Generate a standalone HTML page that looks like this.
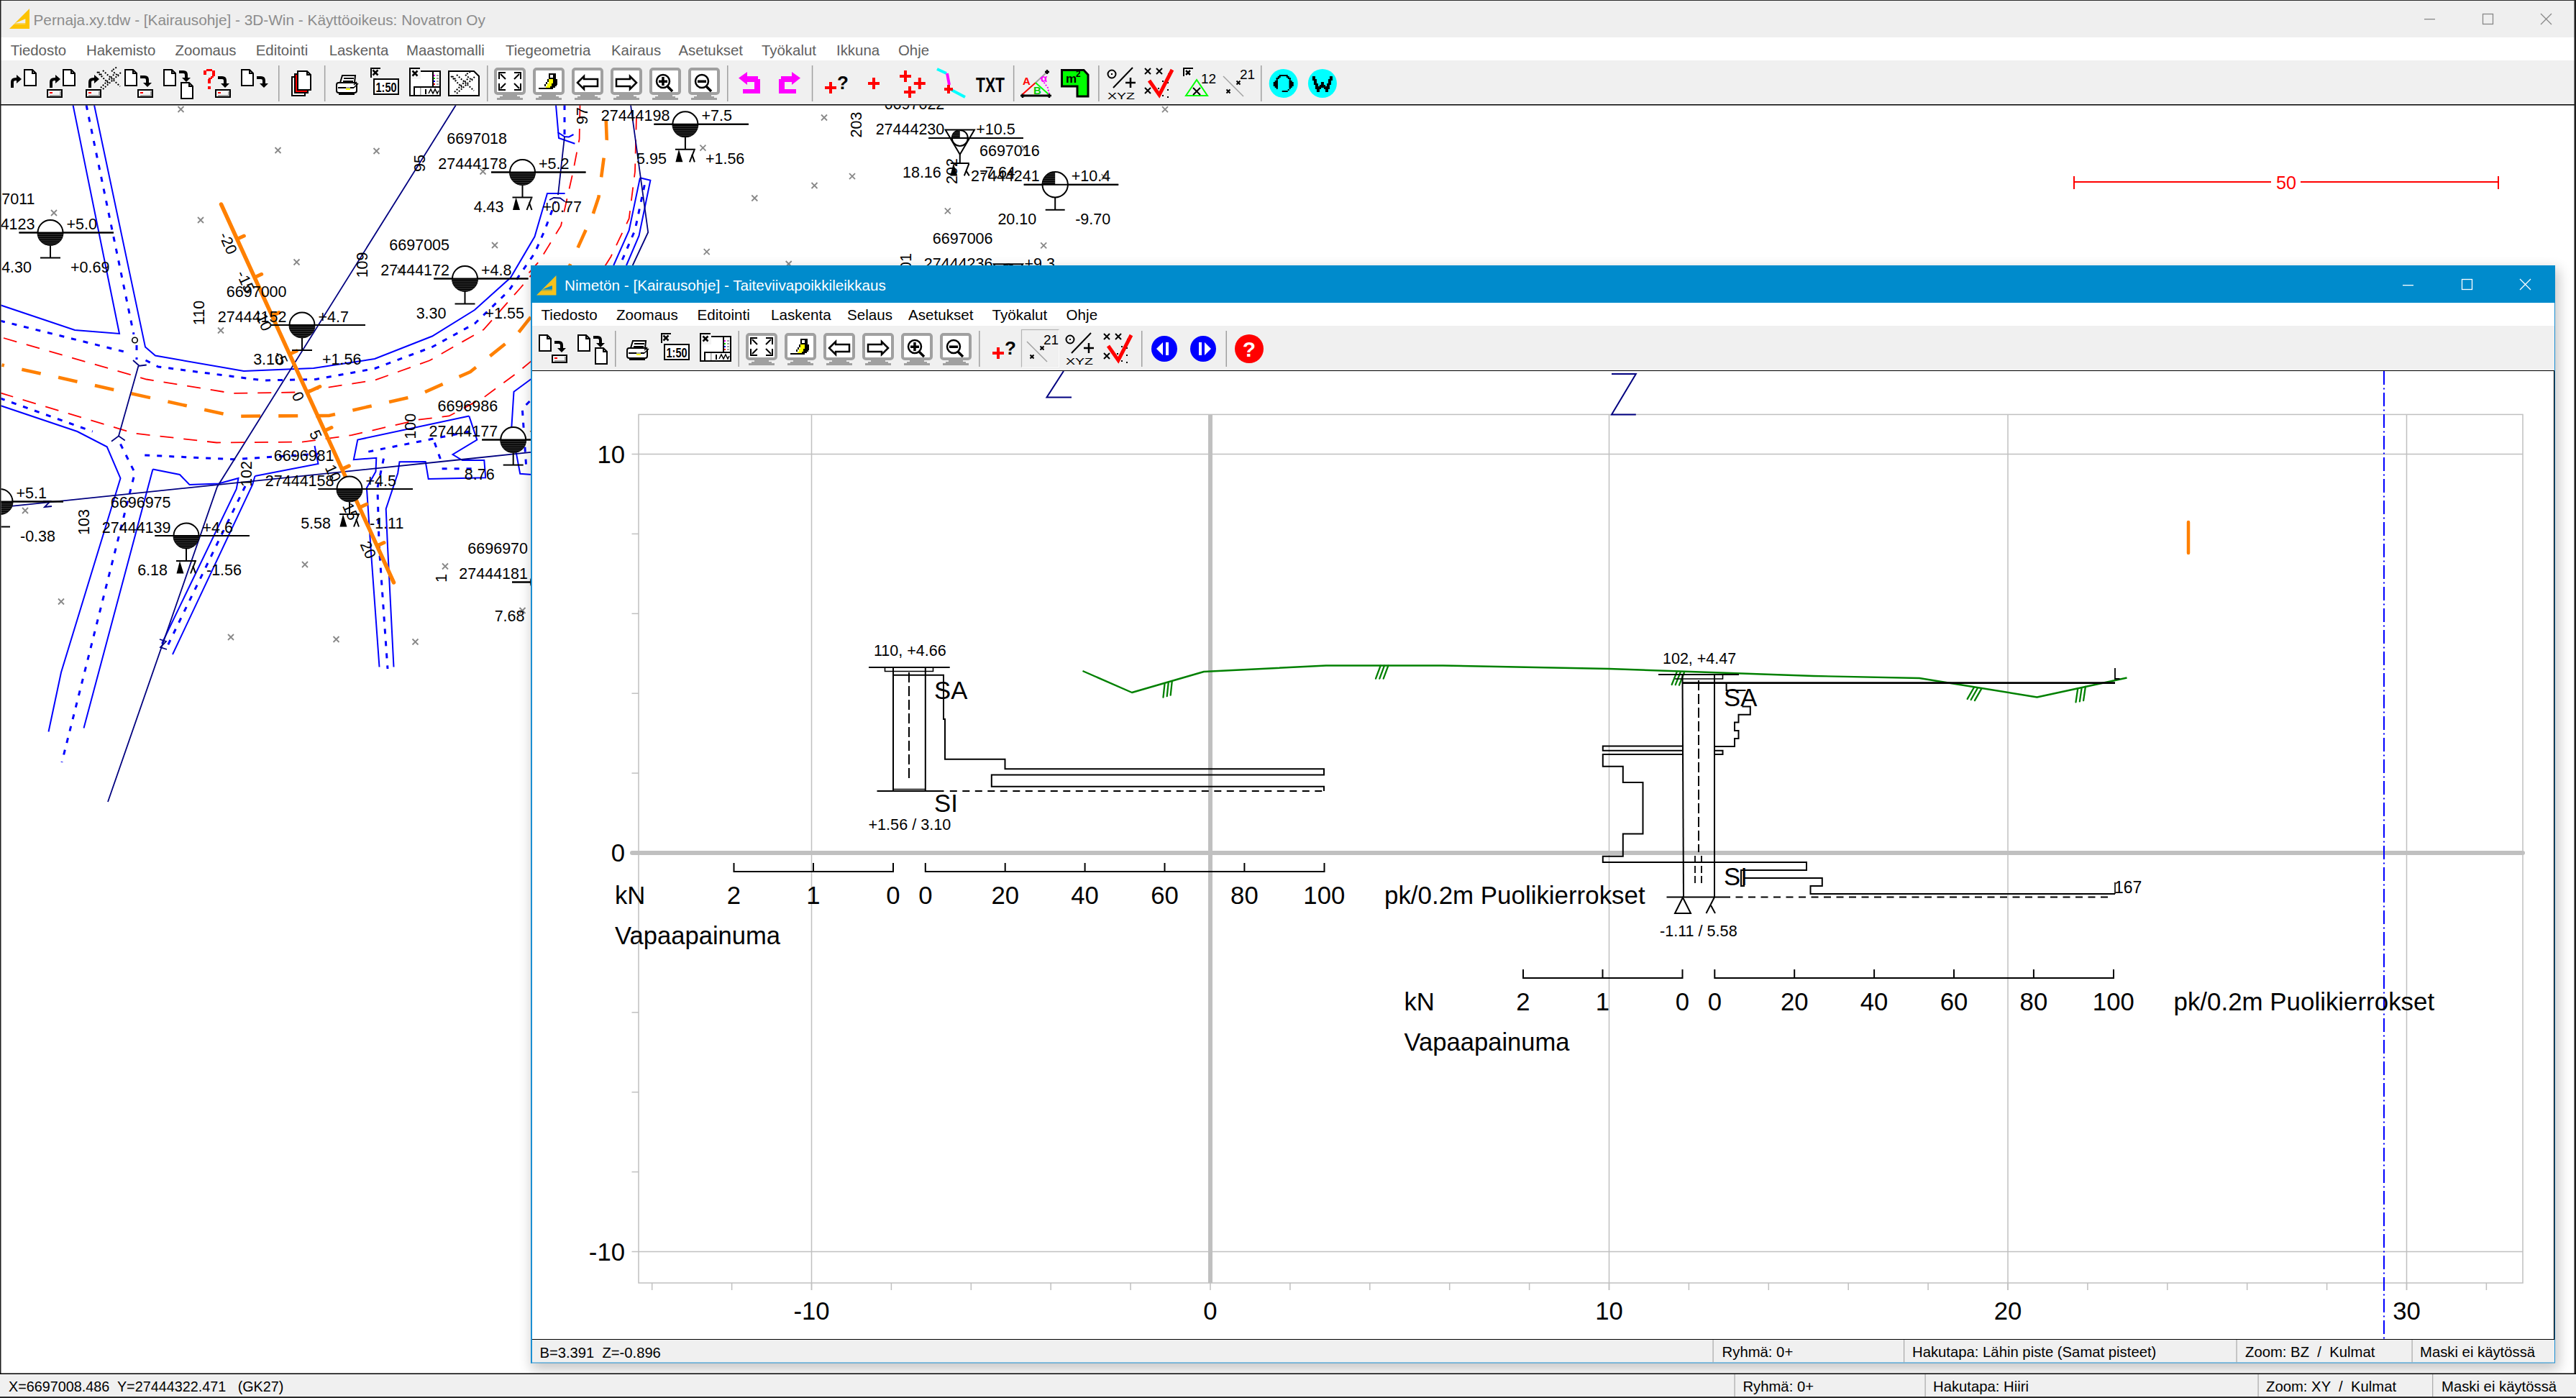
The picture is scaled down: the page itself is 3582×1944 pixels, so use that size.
<!DOCTYPE html>
<html><head><meta charset="utf-8"><title>3D-Win</title>
<style>
html,body{margin:0;padding:0;background:#fff;}
body{width:3582px;height:1944px;overflow:hidden;position:relative;font-family:"Liberation Sans",sans-serif;}
svg{position:absolute;left:0;top:0;}
text{font-family:"Liberation Sans",sans-serif;}
</style></head><body>
<svg width="3582" height="1944" viewBox="0 0 3582 1944">
<defs><clipPath id="mapclip"><rect x="1.5" y="146.5" width="3578" height="1763"/></clipPath><pattern id="hatch" patternUnits="userSpaceOnUse" width="6" height="3"><rect width="6" height="3" fill="#000"/><rect y="1.6" width="6" height="0.7" fill="#666"/></pattern></defs>
<g clip-path="url(#mapclip)">
<path d="M247.5 148l8 8m0 -8l-8 8" stroke="#888888" stroke-width="1.8"/>
<path d="M382.5 205l8 8m0 -8l-8 8" stroke="#888888" stroke-width="1.8"/>
<path d="M519.5 206l8 8m0 -8l-8 8" stroke="#888888" stroke-width="1.8"/>
<path d="M71 292l8 8m0 -8l-8 8" stroke="#888888" stroke-width="1.8"/>
<path d="M275 302l8 8m0 -8l-8 8" stroke="#888888" stroke-width="1.8"/>
<path d="M408.5 360.5l8 8m0 -8l-8 8" stroke="#888888" stroke-width="1.8"/>
<path d="M684 337l8 8m0 -8l-8 8" stroke="#888888" stroke-width="1.8"/>
<path d="M303 455.5l8 8m0 -8l-8 8" stroke="#888888" stroke-width="1.8"/>
<path d="M420 457l8 8m0 -8l-8 8" stroke="#888888" stroke-width="1.8"/>
<path d="M667.5 234.5l8 8m0 -8l-8 8" stroke="#888888" stroke-width="1.8"/>
<path d="M552.5 372l8 8m0 -8l-8 8" stroke="#888888" stroke-width="1.8"/>
<path d="M31 706l8 8m0 -8l-8 8" stroke="#888888" stroke-width="1.8"/>
<path d="M420 781l8 8m0 -8l-8 8" stroke="#888888" stroke-width="1.8"/>
<path d="M615 783.5l8 8m0 -8l-8 8" stroke="#888888" stroke-width="1.8"/>
<path d="M81 832.5l8 8m0 -8l-8 8" stroke="#888888" stroke-width="1.8"/>
<path d="M317 882l8 8m0 -8l-8 8" stroke="#888888" stroke-width="1.8"/>
<path d="M463.5 885l8 8m0 -8l-8 8" stroke="#888888" stroke-width="1.8"/>
<path d="M573.5 888.5l8 8m0 -8l-8 8" stroke="#888888" stroke-width="1.8"/>
<path d="M722.5 845l8 8m0 -8l-8 8" stroke="#888888" stroke-width="1.8"/>
<path d="M973.4 201.6l8 8m0 -8l-8 8" stroke="#888888" stroke-width="1.8"/>
<path d="M1142 159.5l8 8m0 -8l-8 8" stroke="#888888" stroke-width="1.8"/>
<path d="M1181 241.2l8 8m0 -8l-8 8" stroke="#888888" stroke-width="1.8"/>
<path d="M1128.5 254l8 8m0 -8l-8 8" stroke="#888888" stroke-width="1.8"/>
<path d="M1045.3 271.5l8 8m0 -8l-8 8" stroke="#888888" stroke-width="1.8"/>
<path d="M978.7 346.2l8 8m0 -8l-8 8" stroke="#888888" stroke-width="1.8"/>
<path d="M1092.7 363l8 8m0 -8l-8 8" stroke="#888888" stroke-width="1.8"/>
<path d="M1313.8 289.3l8 8m0 -8l-8 8" stroke="#888888" stroke-width="1.8"/>
<path d="M1420.5 202.2l8 8m0 -8l-8 8" stroke="#888888" stroke-width="1.8"/>
<path d="M1531.5 242.1l8 8m0 -8l-8 8" stroke="#888888" stroke-width="1.8"/>
<path d="M1447.2 337.3l8 8m0 -8l-8 8" stroke="#888888" stroke-width="1.8"/>
<path d="M1616 148.2l8 8m0 -8l-8 8" stroke="#888888" stroke-width="1.8"/>
<polyline points="101.5,146 166,464 104,459 0,424" fill="none" stroke="#0000ff" stroke-width="2" />
<polyline points="131,146 202,482.5 216,494.5 339,516 436,512 521,499 601,467.5 660,431 710,386 743.5,329 761,269 785.6,269" fill="none" stroke="#0000ff" stroke-width="2" />
<polyline points="773,146 777,192 799.4,199.75" fill="none" stroke="#0000ff" stroke-width="2" />
<polyline points="775.6,184 785,190 791,190.4 797.5,187" fill="none" stroke="#0000ff" stroke-width="2" />
<polyline points="890,247.25 904.4,250.75 888.5,328 871,369" fill="none" stroke="#0000ff" stroke-width="2" />
<polyline points="890,247.25 874.7,320.4 853.2,369" fill="none" stroke="#0000ff" stroke-width="2" />
<polyline points="0,563.75 107.5,600 148.75,621.25 167.5,665 85,935 67.5,1017.5" fill="none" stroke="#0000ff" stroke-width="2" />
<polyline points="212.5,652.5 116.5,1012.5" fill="none" stroke="#0000ff" stroke-width="2" />
<polyline points="212.5,652.5 250,660 263.5,674 304,672.5 331.5,665 328.75,680 225,895" fill="none" stroke="#0000ff" stroke-width="2" />
<polyline points="354.5,662 351.25,673.75 240,910" fill="none" stroke="#0000ff" stroke-width="2" />
<polyline points="354.5,662 442.5,645 437.5,620" fill="none" stroke="#0000ff" stroke-width="2" />
<polyline points="652.3,578.6 497.3,611.6 491.8,639.2 523.3,636.8 522.5,655.7 509.9,678.5 515.4,760 527.5,927.5" fill="none" stroke="#0000ff" stroke-width="2" />
<polyline points="652.3,578.6 663.3,611.6 629.5,632 642.9,640 673.3,640 675.2,664.3 595.7,665.9 591.7,642 555.5,642.3 553.2,658 536.7,707.6 539,760 547.5,927.5" fill="none" stroke="#0000ff" stroke-width="2" />
<polyline points="740,526 714.5,544.7 711.3,595 723.2,658.8 739.7,660" fill="none" stroke="#0000ff" stroke-width="2" />
<polyline points="120,146 186,465" fill="none" stroke="#0000ff" stroke-width="3" stroke-dasharray="7 10" />
<polyline points="190,480 190,500" fill="none" stroke="#0000ff" stroke-width="3" stroke-dasharray="7 10" />
<circle cx="187.5" cy="473" r="3.8" fill="none" stroke="#000" stroke-width="1.6"/>
<polyline points="202.5,501 220,510 366,529 439,527.5 521,512.5 601,482.5 660,450 707,405 743.5,352 757.5,320 772.5,280" fill="none" stroke="#0000ff" stroke-width="3" stroke-dasharray="7 10" />
<polyline points="785,146 785,187" fill="none" stroke="#0000ff" stroke-width="3" stroke-dasharray="7 10" />
<polyline points="0,446 172.5,489" fill="none" stroke="#0000ff" stroke-width="3" stroke-dasharray="7 10" />
<polyline points="0,553.75 128.75,600" fill="none" stroke="#0000ff" stroke-width="3" stroke-dasharray="7 10" />
<polyline points="167.5,617.5 187.5,657.5 86,1060" fill="none" stroke="#0000ff" stroke-width="3" stroke-dasharray="7 10" />
<polyline points="201.25,633 325,638.75 442.5,631.25" fill="none" stroke="#0000ff" stroke-width="3" stroke-dasharray="7 10" />
<polyline points="341,676 232,900" fill="none" stroke="#0000ff" stroke-width="3" stroke-dasharray="7 10" />
<polyline points="512.3,628.1 653,600" fill="none" stroke="#0000ff" stroke-width="3" stroke-dasharray="7 10" />
<polyline points="604.3,615.5 613.8,642.3" fill="none" stroke="#0000ff" stroke-width="3" stroke-dasharray="7 10" />
<polyline points="614.6,651.7 656.3,651.7" fill="none" stroke="#0000ff" stroke-width="3" stroke-dasharray="7 10" />
<polyline points="533.5,637.6 524.9,678.5 527.2,760 539,930" fill="none" stroke="#0000ff" stroke-width="3" stroke-dasharray="7 10" />
<polyline points="736.5,558 726.3,568.3 731.8,650.2" fill="none" stroke="#0000ff" stroke-width="3" stroke-dasharray="7 10" />
<polyline points="896.25,257.25 883,320 862,369" fill="none" stroke="#0000ff" stroke-width="3" stroke-dasharray="7 10" />
<polyline points="5,470 203.75,527.5 323.75,547 411,545.5 521,528.75 597.5,501.25 672.5,458.4 724,400 745,375" fill="none" stroke="#ff0000" stroke-width="1.8" stroke-dasharray="19 14" />
<polyline points="0,546.25 186.25,602.5 301.25,615.5 420,614.6 488.8,605.2 581.5,583.7 624.5,578.5 672.5,552.8 718.9,518.5 745,497" fill="none" stroke="#ff0000" stroke-width="1.8" stroke-dasharray="19 14" />
<polyline points="806.5,146 805.6,193.5 796.4,241 780,314 749.8,363.3 735,380" fill="none" stroke="#ff0000" stroke-width="1.8" stroke-dasharray="19 14" />
<polyline points="885,161.6 883,238.5 874.7,304 849.4,357 840,372" fill="none" stroke="#ff0000" stroke-width="1.8" stroke-dasharray="19 14" />
<polyline points="2.5,507.5 325,578.75 457.5,578 580,550 654,517 719,465 745,432" fill="none" stroke="#ff8000" stroke-width="4.6" stroke-dasharray="27 25" stroke-dashoffset="23.5"/>
<polyline points="842.75,168 843.75,194.75 839.4,221.6 832.5,274 824.75,297.25 792.7,368.4 785,380" fill="none" stroke="#ff8000" stroke-width="4.6" stroke-dasharray="27 25" stroke-dashoffset="0"/>
<polyline points="634,146 302,677 150,1115" fill="none" stroke="#000080" stroke-width="1.8" />
<polyline points="0,705.5 644,638.75 738,628.9" fill="none" stroke="#000080" stroke-width="1.8" />
<polyline points="192.5,508.75 165,606.25" fill="none" stroke="#000080" stroke-width="1.8" />
<polyline points="785,190 776,271" fill="none" stroke="#000080" stroke-width="1.8" />
<polyline points="877,146 901.2,323 879.7,369" fill="none" stroke="#000080" stroke-width="1.8" />
<polyline points="185,501 193.75,508.75 203.75,507.5" fill="none" stroke="#000080" stroke-width="1.8" />
<polyline points="155,613.75 165,606.25 173.75,612.5" fill="none" stroke="#000080" stroke-width="1.8" />
<polyline points="764,278 770,275 779,275.5 785.6,280.4" fill="none" stroke="#000080" stroke-width="1.8" />
<polyline points="60,697 70,697 62,705 72,704" fill="none" stroke="#000080" stroke-width="1.8" />
<polyline points="222,889 231,892 223,900 232,903" fill="none" stroke="#000080" stroke-width="1.8" />
<line x1="307.5" y1="284" x2="547.5" y2="810" stroke="#ff8000" stroke-width="5.5" stroke-linecap="round"/>
<line x1="331.18" y1="331.77" x2="339.36" y2="328.03" stroke="#ff8000" stroke-width="5" stroke-linecap="round"/>
<text transform="translate(317.53 337.99) rotate(65.5)" text-anchor="middle" y="7.74" font-size="21.5" fill="#000">-20</text>
<line x1="355.51" y1="385.07" x2="363.7" y2="381.34" stroke="#ff8000" stroke-width="5" stroke-linecap="round"/>
<text transform="translate(341.86 391.3) rotate(65.5)" text-anchor="middle" y="7.74" font-size="21.5" fill="#000">-15</text>
<line x1="379.84" y1="438.38" x2="388.03" y2="434.65" stroke="#ff8000" stroke-width="5" stroke-linecap="round"/>
<text transform="translate(366.19 444.61) rotate(65.5)" text-anchor="middle" y="7.74" font-size="21.5" fill="#000">-10</text>
<line x1="404.17" y1="491.69" x2="412.36" y2="487.95" stroke="#ff8000" stroke-width="5" stroke-linecap="round"/>
<text transform="translate(390.52 497.92) rotate(65.5)" text-anchor="middle" y="7.74" font-size="21.5" fill="#000">-5</text>
<line x1="428.5" y1="545" x2="444.87" y2="537.53" stroke="#ff8000" stroke-width="5" stroke-linecap="round"/>
<text transform="translate(414.85 551.23) rotate(65.5)" text-anchor="middle" y="7.74" font-size="21.5" fill="#000">0</text>
<line x1="452.83" y1="598.31" x2="461.02" y2="594.57" stroke="#ff8000" stroke-width="5" stroke-linecap="round"/>
<text transform="translate(439.19 604.54) rotate(65.5)" text-anchor="middle" y="7.74" font-size="21.5" fill="#000">5</text>
<line x1="477.16" y1="651.62" x2="485.35" y2="647.88" stroke="#ff8000" stroke-width="5" stroke-linecap="round"/>
<text transform="translate(463.52 657.84) rotate(65.5)" text-anchor="middle" y="7.74" font-size="21.5" fill="#000">10</text>
<line x1="501.49" y1="704.93" x2="509.68" y2="701.19" stroke="#ff8000" stroke-width="5" stroke-linecap="round"/>
<text transform="translate(487.85 711.15) rotate(65.5)" text-anchor="middle" y="7.74" font-size="21.5" fill="#000">15</text>
<line x1="525.82" y1="758.23" x2="534.01" y2="754.5" stroke="#ff8000" stroke-width="5" stroke-linecap="round"/>
<text transform="translate(512.18 764.46) rotate(65.5)" text-anchor="middle" y="7.74" font-size="21.5" fill="#000">20</text>
<text x="48.5" y="284" font-size="21.5" fill="#000" text-anchor="end" >6697011</text>
<text x="48.5" y="319" font-size="21.5" fill="#000" text-anchor="end" >27444123</text>
<text x="92.5" y="319" font-size="21.5" fill="#000" >+5.0</text>
<text x="44" y="378.5" font-size="21.5" fill="#000" text-anchor="end" >4.30</text>
<text x="98" y="378.5" font-size="21.5" fill="#000" >+0.69</text>
<line x1="26.5" y1="323.5" x2="158" y2="323.5" stroke="#000" stroke-width="2" />
<circle cx="70" cy="323.5" r="17.5" fill="#fff" stroke="#000" stroke-width="2"/>
<path d="M52 323.5 A18 18 0 0 0 88 323.5 Z" fill="url(#hatch)"/>
<line x1="26.5" y1="323.5" x2="158" y2="323.5" stroke="#000" stroke-width="2" />
<line x1="70" y1="341.5" x2="70" y2="358.5" stroke="#000" stroke-width="2" />
<line x1="56" y1="358.5" x2="84" y2="358.5" stroke="#000" stroke-width="2" />
<text x="398.5" y="412.5" font-size="21.5" fill="#000" text-anchor="end" >6697000</text>
<text x="398.5" y="447.5" font-size="21.5" fill="#000" text-anchor="end" >27444152</text>
<text x="442.5" y="447.5" font-size="21.5" fill="#000" >+4.7</text>
<text x="394" y="507" font-size="21.5" fill="#000" text-anchor="end" >3.10</text>
<text x="448" y="507" font-size="21.5" fill="#000" >+1.56</text>
<line x1="376.5" y1="452" x2="508" y2="452" stroke="#000" stroke-width="2" />
<circle cx="420" cy="452" r="17.5" fill="#fff" stroke="#000" stroke-width="2"/>
<path d="M402 452 A18 18 0 0 0 438 452 Z" fill="url(#hatch)"/>
<line x1="376.5" y1="452" x2="508" y2="452" stroke="#000" stroke-width="2" />
<line x1="420" y1="470" x2="420" y2="487" stroke="#000" stroke-width="2" />
<line x1="406" y1="487" x2="434" y2="487" stroke="#000" stroke-width="2" />
<text x="625" y="348" font-size="21.5" fill="#000" text-anchor="end" >6697005</text>
<text x="625" y="383" font-size="21.5" fill="#000" text-anchor="end" >27444172</text>
<text x="669" y="383" font-size="21.5" fill="#000" >+4.8</text>
<text x="620.5" y="442.5" font-size="21.5" fill="#000" text-anchor="end" >3.30</text>
<text x="674.5" y="442.5" font-size="21.5" fill="#000" >+1.55</text>
<line x1="603" y1="387.5" x2="734.5" y2="387.5" stroke="#000" stroke-width="2" />
<circle cx="646.5" cy="387.5" r="17.5" fill="#fff" stroke="#000" stroke-width="2"/>
<path d="M628.5 387.5 A18 18 0 0 0 664.5 387.5 Z" fill="url(#hatch)"/>
<line x1="603" y1="387.5" x2="734.5" y2="387.5" stroke="#000" stroke-width="2" />
<line x1="646.5" y1="405.5" x2="646.5" y2="422.5" stroke="#000" stroke-width="2" />
<line x1="632.5" y1="422.5" x2="660.5" y2="422.5" stroke="#000" stroke-width="2" />
<text x="705" y="200" font-size="21.5" fill="#000" text-anchor="end" >6697018</text>
<text x="705" y="235" font-size="21.5" fill="#000" text-anchor="end" >27444178</text>
<text x="749" y="235" font-size="21.5" fill="#000" >+5.2</text>
<text x="700.5" y="294.5" font-size="21.5" fill="#000" text-anchor="end" >4.43</text>
<text x="754.5" y="294.5" font-size="21.5" fill="#000" >+0.77</text>
<line x1="683" y1="239.5" x2="814.5" y2="239.5" stroke="#000" stroke-width="2" />
<circle cx="726.5" cy="239.5" r="17.5" fill="#fff" stroke="#000" stroke-width="2"/>
<path d="M708.5 239.5 A18 18 0 0 0 744.5 239.5 Z" fill="url(#hatch)"/>
<line x1="683" y1="239.5" x2="814.5" y2="239.5" stroke="#000" stroke-width="2" />
<line x1="726.5" y1="257.5" x2="726.5" y2="274.5" stroke="#000" stroke-width="2" />
<line x1="712.5" y1="274.5" x2="740.5" y2="274.5" stroke="#000" stroke-width="2" />
<polygon points="717.5,274.5 713,292 723,292" fill="#000"/>
<polyline points="739,275.5 732.5,292" fill="none" stroke="#000" stroke-width="2" /><polyline points="735.8,281.5 739.5,292" fill="none" stroke="#000" stroke-width="2" />
<text x="692.2" y="572.1" font-size="21.5" fill="#000" text-anchor="end" >6696986</text>
<text x="692.2" y="607.1" font-size="21.5" fill="#000" text-anchor="end" >27444177</text>
<text x="736.2" y="607.1" font-size="21.5" fill="#000" >+4.7</text>
<text x="687.7" y="666.6" font-size="21.5" fill="#000" text-anchor="end" >8.76</text>
<text x="741.7" y="666.6" font-size="21.5" fill="#000" >+0.6</text>
<line x1="670.2" y1="611.6" x2="801.7" y2="611.6" stroke="#000" stroke-width="2" />
<circle cx="713.7" cy="611.6" r="17.5" fill="#fff" stroke="#000" stroke-width="2"/>
<path d="M695.7 611.6 A18 18 0 0 0 731.7 611.6 Z" fill="url(#hatch)"/>
<line x1="670.2" y1="611.6" x2="801.7" y2="611.6" stroke="#000" stroke-width="2" />
<line x1="713.7" y1="629.6" x2="713.7" y2="646.6" stroke="#000" stroke-width="2" />
<line x1="699.7" y1="646.6" x2="727.7" y2="646.6" stroke="#000" stroke-width="2" />
<text x="464.5" y="640.5" font-size="21.5" fill="#000" text-anchor="end" >6696981</text>
<text x="464.5" y="675.5" font-size="21.5" fill="#000" text-anchor="end" >27444158</text>
<text x="508.5" y="675.5" font-size="21.5" fill="#000" >+4.5</text>
<text x="460" y="735" font-size="21.5" fill="#000" text-anchor="end" >5.58</text>
<text x="514" y="735" font-size="21.5" fill="#000" >-1.11</text>
<line x1="442.5" y1="680" x2="574" y2="680" stroke="#000" stroke-width="2" />
<circle cx="486" cy="680" r="17.5" fill="#fff" stroke="#000" stroke-width="2"/>
<path d="M468 680 A18 18 0 0 0 504 680 Z" fill="url(#hatch)"/>
<line x1="442.5" y1="680" x2="574" y2="680" stroke="#000" stroke-width="2" />
<line x1="486" y1="698" x2="486" y2="715" stroke="#000" stroke-width="2" />
<line x1="472" y1="715" x2="500" y2="715" stroke="#000" stroke-width="2" />
<polygon points="477,715 472.5,732.5 482.5,732.5" fill="#000"/>
<polyline points="498.5,716 492,732.5" fill="none" stroke="#000" stroke-width="2" /><polyline points="495.3,722 499,732.5" fill="none" stroke="#000" stroke-width="2" />
<text x="237.5" y="705.5" font-size="21.5" fill="#000" text-anchor="end" >6696975</text>
<text x="237.5" y="740.5" font-size="21.5" fill="#000" text-anchor="end" >27444139</text>
<text x="281.5" y="740.5" font-size="21.5" fill="#000" >+4.6</text>
<text x="233" y="800" font-size="21.5" fill="#000" text-anchor="end" >6.18</text>
<text x="287" y="800" font-size="21.5" fill="#000" >-1.56</text>
<line x1="215.5" y1="745" x2="347" y2="745" stroke="#000" stroke-width="2" />
<circle cx="259" cy="745" r="17.5" fill="#fff" stroke="#000" stroke-width="2"/>
<path d="M241 745 A18 18 0 0 0 277 745 Z" fill="url(#hatch)"/>
<line x1="215.5" y1="745" x2="347" y2="745" stroke="#000" stroke-width="2" />
<line x1="259" y1="763" x2="259" y2="780" stroke="#000" stroke-width="2" />
<line x1="245" y1="780" x2="273" y2="780" stroke="#000" stroke-width="2" />
<polygon points="250,780 245.5,797.5 255.5,797.5" fill="#000"/>
<polyline points="271.5,781 265,797.5" fill="none" stroke="#000" stroke-width="2" /><polyline points="268.3,787 272,797.5" fill="none" stroke="#000" stroke-width="2" />
<text x="22.5" y="693" font-size="21.5" fill="#000" >+5.1</text>
<text x="28" y="752.5" font-size="21.5" fill="#000" >-0.38</text>
<line x1="-43.5" y1="697.5" x2="88" y2="697.5" stroke="#000" stroke-width="2" />
<circle cx="0" cy="697.5" r="17.5" fill="#fff" stroke="#000" stroke-width="2"/>
<path d="M-18 697.5 A18 18 0 0 0 18 697.5 Z" fill="url(#hatch)"/>
<line x1="-43.5" y1="697.5" x2="88" y2="697.5" stroke="#000" stroke-width="2" />
<line x1="0" y1="715.5" x2="0" y2="732.5" stroke="#000" stroke-width="2" />
<line x1="-14" y1="732.5" x2="14" y2="732.5" stroke="#000" stroke-width="2" />
<text x="734" y="769.9" font-size="21.5" fill="#000" text-anchor="end" >6696970</text>
<text x="734" y="804.9" font-size="21.5" fill="#000" text-anchor="end" >27444181</text>
<text x="778" y="804.9" font-size="21.5" fill="#000" >+4.2</text>
<text x="729.5" y="864.4" font-size="21.5" fill="#000" text-anchor="end" >7.68</text>
<text x="783.5" y="864.4" font-size="21.5" fill="#000" >+0.5</text>
<line x1="712" y1="809.4" x2="843.5" y2="809.4" stroke="#000" stroke-width="2" />
<circle cx="755.5" cy="809.4" r="17.5" fill="#fff" stroke="#000" stroke-width="2"/>
<path d="M737.5 809.4 A18 18 0 0 0 773.5 809.4 Z" fill="url(#hatch)"/>
<line x1="712" y1="809.4" x2="843.5" y2="809.4" stroke="#000" stroke-width="2" />
<line x1="755.5" y1="827.4" x2="755.5" y2="844.4" stroke="#000" stroke-width="2" />
<line x1="741.5" y1="844.4" x2="769.5" y2="844.4" stroke="#000" stroke-width="2" />
<text x="931.4" y="133.3" font-size="21.5" fill="#000" text-anchor="end" >6697022</text>
<text x="931.4" y="168.3" font-size="21.5" fill="#000" text-anchor="end" >27444198</text>
<text x="975.4" y="168.3" font-size="21.5" fill="#000" >+7.5</text>
<text x="926.9" y="227.8" font-size="21.5" fill="#000" text-anchor="end" >5.95</text>
<text x="980.9" y="227.8" font-size="21.5" fill="#000" >+1.56</text>
<line x1="909.4" y1="172.8" x2="1040.9" y2="172.8" stroke="#000" stroke-width="2" />
<circle cx="952.9" cy="172.8" r="17.5" fill="#fff" stroke="#000" stroke-width="2"/>
<path d="M934.9 172.8 A18 18 0 0 0 970.9 172.8 Z" fill="url(#hatch)"/>
<line x1="909.4" y1="172.8" x2="1040.9" y2="172.8" stroke="#000" stroke-width="2" />
<line x1="952.9" y1="190.8" x2="952.9" y2="207.8" stroke="#000" stroke-width="2" />
<line x1="938.9" y1="207.8" x2="966.9" y2="207.8" stroke="#000" stroke-width="2" />
<polygon points="943.9,207.8 939.4,225.3 949.4,225.3" fill="#000"/>
<polyline points="965.4,208.8 958.9,225.3" fill="none" stroke="#000" stroke-width="2" /><polyline points="962.2,214.8 965.9,225.3" fill="none" stroke="#000" stroke-width="2" />
<text x="1313.3" y="152.4" font-size="21.5" fill="#000" text-anchor="end" >6697022</text>
<text x="1313.3" y="187.4" font-size="21.5" fill="#000" text-anchor="end" >27444230</text>
<text x="1357.3" y="187.4" font-size="21.5" fill="#000" >+10.5</text>
<text x="1308.8" y="246.9" font-size="21.5" fill="#000" text-anchor="end" >18.16</text>
<text x="1362.8" y="246.9" font-size="21.5" fill="#000" >-7.64</text>
<line x1="1291.3" y1="191.9" x2="1422.8" y2="191.9" stroke="#000" stroke-width="2" />
<polygon points="1314.6,180.6 1355,180.6 1334.8,214.7" fill="none" stroke="#000" stroke-width="2"/>
<circle cx="1334.8" cy="191.9" r="11" fill="#fff" stroke="#000" stroke-width="2"/>
<path d="M1334.8 191.9 V180.9 A11 11 0 0 0 1323.8 191.9 Z" fill="url(#hatch)"/>
<line x1="1291.3" y1="191.9" x2="1422.8" y2="191.9" stroke="#000" stroke-width="2" />
<line x1="1334.8" y1="214.7" x2="1334.8" y2="226.9" stroke="#000" stroke-width="2" />
<line x1="1321.8" y1="226.9" x2="1347.8" y2="226.9" stroke="#000" stroke-width="2" />
<polygon points="1325.8,226.9 1321.3,244.4 1331.3,244.4" fill="#000"/>
<polyline points="1347.3,227.9 1340.8,244.4" fill="none" stroke="#000" stroke-width="2" /><polyline points="1343.3,237.4 1347.8,244.4" fill="none" stroke="#000" stroke-width="2" />
<text x="1445.7" y="217.3" font-size="21.5" fill="#000" text-anchor="end" >6697016</text>
<text x="1445.7" y="252.3" font-size="21.5" fill="#000" text-anchor="end" >27444241</text>
<text x="1489.7" y="252.3" font-size="21.5" fill="#000" >+10.4</text>
<text x="1441.2" y="311.8" font-size="21.5" fill="#000" text-anchor="end" >20.10</text>
<text x="1495.2" y="311.8" font-size="21.5" fill="#000" >-9.70</text>
<line x1="1423.7" y1="256.8" x2="1555.2" y2="256.8" stroke="#000" stroke-width="2" />
<circle cx="1467.2" cy="256.8" r="17.7" fill="#fff" stroke="#000" stroke-width="2"/>
<path d="M1467.2 256.8 V239.1 A17.7 17.7 0 0 0 1449.5 256.8 Z" fill="url(#hatch)"/>
<line x1="1423.7" y1="256.8" x2="1555.2" y2="256.8" stroke="#000" stroke-width="2" />
<line x1="1467.2" y1="274.5" x2="1467.2" y2="291.8" stroke="#000" stroke-width="2" />
<line x1="1453.7" y1="291.8" x2="1480.7" y2="291.8" stroke="#000" stroke-width="2" />
<text x="1380.5" y="339" font-size="21.5" fill="#000" text-anchor="end" >6697006</text>
<text x="1380.5" y="374" font-size="21.5" fill="#000" text-anchor="end" >27444236</text>
<text x="1424.5" y="374" font-size="21.5" fill="#000" >+9.3</text>
<line x1="1358.5" y1="378.5" x2="1490" y2="378.5" stroke="#000" stroke-width="2" />
<polygon points="1381.8,367.2 1422.2,367.2 1402,401.3" fill="none" stroke="#000" stroke-width="2"/>
<circle cx="1402" cy="378.5" r="11" fill="#fff" stroke="#000" stroke-width="2"/>
<path d="M1402 378.5 V367.5 A11 11 0 0 0 1391 378.5 Z" fill="url(#hatch)"/>
<line x1="1358.5" y1="378.5" x2="1490" y2="378.5" stroke="#000" stroke-width="2" />
<line x1="1402" y1="401.3" x2="1402" y2="413.5" stroke="#000" stroke-width="2" />
<line x1="1389" y1="413.5" x2="1415" y2="413.5" stroke="#000" stroke-width="2" />
<polygon points="1393,413.5 1388.5,431 1398.5,431" fill="#000"/>
<polyline points="1414.5,414.5 1408,431" fill="none" stroke="#000" stroke-width="2" /><polyline points="1410.5,424 1415,431" fill="none" stroke="#000" stroke-width="2" />
<text transform="translate(276.5 435) rotate(-90)" text-anchor="middle" y="7.74" font-size="21.5" fill="#000">110</text>
<text transform="translate(503 368.4) rotate(-90)" text-anchor="middle" y="7.74" font-size="21.5" fill="#000">109</text>
<text transform="translate(583 227) rotate(-90)" text-anchor="middle" y="7.74" font-size="21.5" fill="#000">95</text>
<text transform="translate(116 726) rotate(-90)" text-anchor="middle" y="7.74" font-size="21.5" fill="#000">103</text>
<text transform="translate(342 659) rotate(-90)" text-anchor="middle" y="7.74" font-size="21.5" fill="#000">102</text>
<text transform="translate(570.5 592.7) rotate(-90)" text-anchor="middle" y="7.74" font-size="21.5" fill="#000">100</text>
<text transform="translate(808.8 161) rotate(-90)" text-anchor="middle" y="7.74" font-size="21.5" fill="#000">97</text>
<text transform="translate(1190.5 173.5) rotate(-90)" text-anchor="middle" y="7.74" font-size="21.5" fill="#000">203</text>
<text transform="translate(1323 238) rotate(-90)" text-anchor="middle" y="7.74" font-size="21.5" fill="#000">202</text>
<text transform="translate(1259 370) rotate(-90)" text-anchor="middle" y="7.74" font-size="21.5" fill="#000">201</text>
<text transform="translate(613 804) rotate(-90)" text-anchor="middle" y="7.74" font-size="21.5" fill="#000">1</text>
<line x1="2884" y1="253" x2="3158" y2="253" stroke="#ff0000" stroke-width="2" /><line x1="3199" y1="253" x2="3474" y2="253" stroke="#ff0000" stroke-width="2" /><line x1="2884" y1="245" x2="2884" y2="263" stroke="#ff0000" stroke-width="2" /><line x1="3474" y1="245" x2="3474" y2="263" stroke="#ff0000" stroke-width="2" />
<text x="3179" y="262.6" font-size="25.2" fill="#ff0000" text-anchor="middle" >50</text>
</g>
<rect x="0" y="0" width="3582" height="52" fill="#efefef"/>
<rect x="0" y="0" width="3582" height="1" fill="#2b2b2b"/>
<rect x="0" y="52" width="3582" height="32" fill="#fff"/>
<rect x="0" y="84" width="3582" height="61" fill="#f0f0f0"/>
<rect x="0" y="145" width="3582" height="1.5" fill="#000"/>
<rect x="0" y="0" width="1.5" height="1944" fill="#1e1e1e"/>
<rect x="3579.5" y="0" width="2.5" height="1944" fill="#1e1e1e"/>
<polygon points="41,12 41,40 13,40" fill="#fdc300"/><polygon points="35.3,26.2 35.3,32 21.4,32" fill="#efefef"/><polygon points="21.4,32 35.3,32 35.3,34 18.5,34" fill="#efefef" opacity="0.35"/>
<text x="46.5" y="35" font-size="20.8" fill="#8c8c8c" >Pernaja.xy.tdw - [Kairausohje] - 3D-Win - Käyttöoikeus: Novatron Oy</text>
<rect x="3371" y="26" width="15" height="1.3" fill="#888888"/>
<rect x="3452.5" y="19.5" width="14" height="14" fill="none" stroke="#888888" stroke-width="1.3"/>
<path d="M3533 19 L3548 34 M3548 19 L3533 34" stroke="#888888" stroke-width="1.3"/>
<text x="14.7" y="76.5" font-size="20.4" fill="#606060" >Tiedosto</text>
<text x="120" y="76.5" font-size="20.4" fill="#606060" >Hakemisto</text>
<text x="243.5" y="76.5" font-size="20.4" fill="#606060" >Zoomaus</text>
<text x="355.7" y="76.5" font-size="20.4" fill="#606060" >Editointi</text>
<text x="457.7" y="76.5" font-size="20.4" fill="#606060" >Laskenta</text>
<text x="565" y="76.5" font-size="20.4" fill="#606060" >Maastomalli</text>
<text x="703" y="76.5" font-size="20.4" fill="#606060" >Tiegeometria</text>
<text x="850" y="76.5" font-size="20.4" fill="#606060" >Kairaus</text>
<text x="943.5" y="76.5" font-size="20.4" fill="#606060" >Asetukset</text>
<text x="1059" y="76.5" font-size="20.4" fill="#606060" >Työkalut</text>
<text x="1163" y="76.5" font-size="20.4" fill="#606060" >Ikkuna</text>
<text x="1249" y="76.5" font-size="20.4" fill="#606060" >Ohje</text>
<g shape-rendering="geometricPrecision"><path d="M17 122 V114 Q17 110 22 110 H24" fill="none" stroke="#000" stroke-width="4"/><polygon points="23,104 30,110 23,116" fill="#000"/><polygon points="34,97 45,97 50,102 50,119 34,119" fill="#fff" stroke="#000" stroke-width="2"/><polyline points="45,97 45,102 50,102" fill="none" stroke="#000" stroke-width="2"/><path d="M71 122 V114 Q71 110 76 110 H78" fill="none" stroke="#000" stroke-width="4"/><polygon points="77,104 84,110 77,116" fill="#000"/><polygon points="88,97 99,97 104,102 104,119 88,119" fill="#fff" stroke="#000" stroke-width="2"/><polyline points="99,97 99,102 104,102" fill="none" stroke="#000" stroke-width="2"/><rect x="66" y="125" width="20" height="10" fill="#f4f4f4" stroke="#000" stroke-width="2"/><rect x="69" y="128" width="4" height="2" fill="#f00"/><rect x="69" y="132" width="16" height="2" fill="#a0a0a0"/><rect x="83" y="127" width="2" height="7" fill="#a0a0a0"/><path d="M125 122 V114 Q125 110 130 110 H132" fill="none" stroke="#000" stroke-width="4"/><polygon points="131,104 138,110 131,116" fill="#000"/><polygon opacity="0" points="132,93 167,93 174,100 174,127 132,127" fill="none" stroke="#000" stroke-width="2"/><path d="M137 100 l6 6 M135 100 l16 16 M143 98 l24 22 M140 122 l20 -20 M143 124 l26 -24 M155 98 l10 8 M157 97 l6 -4" stroke="#000" stroke-width="2" stroke-dasharray="2 2" fill="none"/><rect x="120" y="125" width="20" height="10" fill="#f4f4f4" stroke="#000" stroke-width="2"/><rect x="123" y="128" width="4" height="2" fill="#f00"/><rect x="123" y="132" width="16" height="2" fill="#a0a0a0"/><rect x="137" y="127" width="2" height="7" fill="#a0a0a0"/><polygon points="174,97 185,97 190,102 190,119 174,119" fill="#fff" stroke="#000" stroke-width="2"/><polyline points="185,97 185,102 190,102" fill="none" stroke="#000" stroke-width="2"/><path d="M195 107 H201 Q205 107 205 111 V116" fill="none" stroke="#000" stroke-width="4"/><polygon points="199,115 211,115 205,121" fill="#000"/><rect x="192" y="125" width="20" height="10" fill="#f4f4f4" stroke="#000" stroke-width="2"/><rect x="195" y="128" width="4" height="2" fill="#f00"/><rect x="195" y="132" width="16" height="2" fill="#a0a0a0"/><rect x="209" y="127" width="2" height="7" fill="#a0a0a0"/><polygon points="228,97 239,97 244,102 244,119 228,119" fill="#fff" stroke="#000" stroke-width="2"/><polyline points="239,97 239,102 244,102" fill="none" stroke="#000" stroke-width="2"/><path d="M249 100 H255 Q259 100 259 104 V109" fill="none" stroke="#000" stroke-width="4"/><polygon points="253,108 265,108 259,114" fill="#000"/><polygon points="252,115 263,115 268,120 268,137 252,137" fill="#fff" stroke="#000" stroke-width="2"/><polyline points="263,115 263,120 268,120" fill="none" stroke="#000" stroke-width="2"/><rect x="287" y="96" width="8" height="3" fill="#f00"/><rect x="283" y="98" width="4" height="6" fill="#f00"/><rect x="295" y="98" width="4" height="8" fill="#f00"/><rect x="293" y="106" width="4" height="2" fill="#f00"/><rect x="290" y="108" width="5" height="2" fill="#f00"/><rect x="289" y="110" width="4" height="6" fill="#f00"/><rect x="289" y="120" width="4" height="4" fill="#f00"/><path d="M303 108 H309 Q313 108 313 112 V117" fill="none" stroke="#000" stroke-width="4"/><polygon points="307,116 319,116 313,122" fill="#000"/><rect x="300" y="125" width="20" height="10" fill="#f4f4f4" stroke="#000" stroke-width="2"/><rect x="303" y="128" width="4" height="2" fill="#f00"/><rect x="303" y="132" width="16" height="2" fill="#a0a0a0"/><rect x="317" y="127" width="2" height="7" fill="#a0a0a0"/><polygon points="336,97 347,97 352,102 352,119 336,119" fill="#fff" stroke="#000" stroke-width="2"/><polyline points="347,97 347,102 352,102" fill="none" stroke="#000" stroke-width="2"/><path d="M357 108 H363 Q367 108 367 112 V117" fill="none" stroke="#000" stroke-width="4"/><polygon points="361,116 373,116 367,122" fill="#000"/><rect x="387" y="91" width="1.5" height="50" fill="#a0a0a0"/><rect x="406" y="107" width="18" height="26" fill="#fff" stroke="#000" stroke-width="2"/><rect x="410" y="103" width="18" height="26" fill="#f00" stroke="#000" stroke-width="2"/><rect x="413" y="102" width="16" height="24" fill="#fff"/><rect x="413" y="102" width="2" height="0" fill="#000"/><polygon points="414,99 427,99 432,104 432,125 414,125" fill="#fff" stroke="#000" stroke-width="2"/><polyline points="427,99 427,104 432,104" fill="none" stroke="#000" stroke-width="2"/><rect x="450.9" y="91" width="1.5" height="50" fill="#a0a0a0"/><polygon points="476,105 494,105 493,115 473,115" fill="#fff" stroke="#000" stroke-width="2"/><rect x="478" y="108" width="14" height="2" fill="#000"/><rect x="477" y="112" width="14" height="2" fill="#000"/><rect x="468" y="115" width="28" height="14" rx="3" fill="#fff" stroke="#000" stroke-width="2"/><rect x="470" y="121" width="22" height="2" fill="#000"/><rect x="481" y="123" width="6" height="2" fill="#ff0"/><rect x="481" y="121" width="6" height="2" fill="#a0a0a0"/><rect x="471" y="129" width="22" height="3" fill="#000"/><path d="M492 118l4 -4m-4 8l6 -6" stroke="#000" stroke-width="1.5"/><rect x="516" y="95" width="12" height="12" fill="#f4f4f4" stroke="#000" stroke-width="2"/><rect x="527" y="94" width="2" height="14" fill="#f0f0f0"/><rect x="515" y="106" width="14" height="2" fill="#f0f0f0"/><rect x="515" y="94" width="14" height="2" fill="#000"/><rect x="515" y="94" width="2" height="14" fill="#000"/><path d="M518.5 97.5L525.5 104.5M525.5 97.5L518.5 104.5" stroke="#000" stroke-width="2.5"/><rect x="520" y="110" width="34" height="21" fill="#fff" stroke="#000" stroke-width="2"/><text x="522.5" y="128" font-size="19" font-family="Liberation Mono" font-weight="bold" fill="#000" textLength="29" lengthAdjust="spacingAndGlyphs">1:50</text><rect x="570" y="99" width="42" height="34" fill="#fff" stroke="#000" stroke-width="2"/><rect x="569" y="94" width="15" height="2" fill="#000"/><rect x="569" y="94" width="2" height="14" fill="#000"/><rect x="571" y="96" width="14" height="14" fill="#f4f4f4"/><path d="M573.5 98.5L580.5 105.5M580.5 98.5L573.5 105.5" stroke="#000" stroke-width="2.5"/><rect x="584" y="98" width="2" height="0" fill="#000"/><rect x="601" y="98" width="2" height="24" fill="#000"/><rect x="575" y="120" width="38" height="2" fill="#000"/><rect x="575" y="120" width="2" height="14" fill="#000"/><rect x="584" y="122" width="1.5" height="10" fill="#a0a0a0"/><rect x="603" y="104" width="2" height="2" fill="#f0f"/><rect x="607" y="104" width="3" height="2" fill="#a0a0a0"/><rect x="603" y="108" width="2" height="2" fill="#0c0"/><rect x="607" y="108" width="3" height="2" fill="#a0a0a0"/><rect x="603" y="112" width="2" height="2" fill="#00f"/><rect x="607" y="112" width="3" height="2" fill="#a0a0a0"/><rect x="603" y="116" width="2" height="2" fill="#f00"/><rect x="607" y="116" width="3" height="2" fill="#a0a0a0"/><path d="M596 130 l3 -6 l3 6 l3 -6 l3 6 l2 -4" fill="none" stroke="#000" stroke-width="1.5"/><rect x="591" y="124" width="2" height="7" fill="#000"/><polygon points="624,99 659,99 666,106 666,133 624,133" fill="#fff" stroke="#000" stroke-width="2"/><path d="M629 106 l6 6 M627 106 l16 16 M635 104 l24 22 M632 128 l20 -20 M635 130 l26 -24 M647 104 l10 8 M649 103 l6 -4" stroke="#000" stroke-width="2" stroke-dasharray="2 2" fill="none"/><rect x="677" y="91" width="1.5" height="50" fill="#a0a0a0"/><rect x="689" y="96" width="40" height="34" rx="3" fill="#fff" stroke="#a0a0a0" stroke-width="4"/><rect x="699" y="132" width="20" height="2" fill="#a0a0a0"/><rect x="695" y="134" width="28" height="2" fill="#a0a0a0"/><rect x="691" y="136" width="36" height="3" fill="#a0a0a0"/><path d="M693 101 h10 M694 100 v10 M696 103 l7 7" stroke="#000" stroke-width="2" fill="none"/><path d="M725 101 h-10 M724 100 v10 M722 103 l-7 7" stroke="#000" stroke-width="2" fill="none"/><path d="M693 125 h10 M694 126 v-10 M696 123 l7 -7" stroke="#000" stroke-width="2" fill="none"/><path d="M725 125 h-10 M724 126 v-10 M722 123 l-7 -7" stroke="#000" stroke-width="2" fill="none"/><rect x="743" y="96" width="40" height="34" rx="3" fill="#fff" stroke="#a0a0a0" stroke-width="4"/><rect x="753" y="132" width="20" height="2" fill="#a0a0a0"/><rect x="749" y="134" width="28" height="2" fill="#a0a0a0"/><rect x="745" y="136" width="36" height="3" fill="#a0a0a0"/><rect x="763" y="102" width="10" height="8" fill="#000"/><rect x="765" y="104" width="4" height="4" fill="#fff"/><rect x="769" y="110" width="6" height="8" fill="#000"/><rect x="770" y="118" width="4" height="2" fill="#000"/><rect x="765" y="120" width="7" height="2" fill="#000"/><rect x="763" y="110" width="6" height="6" fill="#ff0"/><rect x="761" y="116" width="6" height="4" fill="#ff0"/><rect x="759" y="120" width="6" height="2" fill="#ff0"/><rect x="761" y="110" width="2" height="4" fill="#000"/><rect x="759" y="114" width="2" height="3" fill="#000"/><rect x="757" y="117" width="2" height="3" fill="#000"/><rect x="767" y="116" width="3" height="4" fill="#000"/><rect x="749" y="122" width="20" height="2" fill="#000"/><rect x="797" y="96" width="40" height="34" rx="3" fill="#fff" stroke="#a0a0a0" stroke-width="4"/><rect x="807" y="132" width="20" height="2" fill="#a0a0a0"/><rect x="803" y="134" width="28" height="2" fill="#a0a0a0"/><rect x="799" y="136" width="36" height="3" fill="#a0a0a0"/><polygon points="803,115 812,106 812,110 831,110 831,120 812,120 812,124" fill="#fff" stroke="#000" stroke-width="2.5"/><rect x="851" y="96" width="40" height="34" rx="3" fill="#fff" stroke="#a0a0a0" stroke-width="4"/><rect x="861" y="132" width="20" height="2" fill="#a0a0a0"/><rect x="857" y="134" width="28" height="2" fill="#a0a0a0"/><rect x="853" y="136" width="36" height="3" fill="#a0a0a0"/><polygon points="885,115 876,106 876,110 857,110 857,120 876,120 876,124" fill="#fff" stroke="#000" stroke-width="2.5"/><rect x="905" y="96" width="40" height="34" rx="3" fill="#fff" stroke="#a0a0a0" stroke-width="4"/><rect x="915" y="132" width="20" height="2" fill="#a0a0a0"/><rect x="911" y="134" width="28" height="2" fill="#a0a0a0"/><rect x="907" y="136" width="36" height="3" fill="#a0a0a0"/><circle cx="922" cy="113" r="9" fill="#fff" stroke="#000" stroke-width="2.5"/><rect x="916" y="111.5" width="12" height="3.5" fill="#000"/><rect x="920.2" y="107" width="3.5" height="12" fill="#000"/><polyline points="928,120 935,127" fill="none" stroke="#000" stroke-width="3.5" /><rect x="959" y="96" width="40" height="34" rx="3" fill="#fff" stroke="#a0a0a0" stroke-width="4"/><rect x="969" y="132" width="20" height="2" fill="#a0a0a0"/><rect x="965" y="134" width="28" height="2" fill="#a0a0a0"/><rect x="961" y="136" width="36" height="3" fill="#a0a0a0"/><circle cx="976" cy="113" r="9" fill="#fff" stroke="#000" stroke-width="2.5"/><rect x="970" y="111.5" width="12" height="3.5" fill="#000"/><polyline points="982,120 989,127" fill="none" stroke="#000" stroke-width="3.5" /><rect x="1011" y="91" width="1.5" height="50" fill="#a0a0a0"/><polygon points="1027,108.5 1039,100 1039,118" fill="#f0f"/><rect x="1037" y="106" width="17" height="8" fill="#f0f"/><rect x="1049" y="110" width="8" height="18" fill="#f0f"/><rect x="1033" y="124" width="24" height="6" fill="#f0f"/><rect x="1035" y="106" width="22" height="22" rx="5" fill="none" stroke="#f0f" stroke-width="0"/><polygon points="1113,108.5 1101,100 1101,118" fill="#f0f"/><rect x="1086" y="106" width="17" height="8" fill="#f0f"/><rect x="1083" y="110" width="8" height="18" fill="#f0f"/><rect x="1083" y="124" width="24" height="6" fill="#f0f"/><rect x="1128.8" y="91" width="1.5" height="50" fill="#a0a0a0"/><rect x="1147" y="120" width="16" height="4" fill="#f00"/><rect x="1153" y="114" width="4" height="16" fill="#f00"/><text x="1164" y="124" font-size="26" font-weight="bold" fill="#000">?</text><rect x="1207" y="114" width="16" height="4" fill="#f00"/><rect x="1213" y="108" width="4" height="16" fill="#f00"/><rect x="1251" y="104" width="16" height="4" fill="#f00"/><rect x="1257" y="98" width="4" height="16" fill="#f00"/><rect x="1270.8" y="114" width="16" height="4" fill="#f00"/><rect x="1276.8" y="108" width="4" height="16" fill="#f00"/><rect x="1257" y="126" width="16" height="4" fill="#f00"/><rect x="1263" y="120" width="4" height="16" fill="#f00"/><polyline points="1303,96 1316,102" fill="none" stroke="#0ff" stroke-width="4" /><polyline points="1317,102 1320,118" fill="none" stroke="#f0f" stroke-width="4" /><polyline points="1323,125 1342,135" fill="none" stroke="#0ff" stroke-width="4" /><rect x="1313" y="122" width="12" height="4" fill="#f00"/><rect x="1317" y="118" width="4" height="12" fill="#f00"/><text x="1357" y="128" font-size="30" font-weight="bold" font-family="Liberation Sans" fill="#000" textLength="40" lengthAdjust="spacingAndGlyphs">TXT</text><rect x="1408.9" y="91" width="1.5" height="50" fill="#a0a0a0"/><polyline points="1420,133 1460,133" fill="none" stroke="#000" stroke-width="3" /><rect x="1419" y="131.75" width="6" height="2.5" fill="#000"/><rect x="1420.75" y="130" width="2.5" height="6" fill="#000"/><rect x="1456" y="131.75" width="6" height="2.5" fill="#000"/><rect x="1457.75" y="130" width="2.5" height="6" fill="#000"/><polyline points="1422,131 1440,115" fill="none" stroke="#f00" stroke-width="2" /><polyline points="1440,115 1456,100" fill="none" stroke="#a0a0a0" stroke-width="2" /><rect x="1453" y="98.75" width="6" height="2.5" fill="#000"/><rect x="1454.75" y="97" width="2.5" height="6" fill="#000"/><polyline points="1440,115 1458,131" fill="none" stroke="#0f0" stroke-width="2" /><polyline points="1447,108 1457,122 1459,131" fill="none" stroke="#f0f" stroke-width="2" stroke-dasharray="2 2" /><text x="1422" y="118" font-size="15" font-weight="bold" fill="#f00">A</text><text x="1437" y="131" font-size="15" font-weight="bold" fill="#0c0">B</text><text x="1447" y="114" font-size="15" font-weight="bold" fill="#f0f">α</text><polygon points="1476.5,97.5 1507,97.5 1513,104 1513,134 1498,134 1498,120 1476.5,120" fill="#0f0" stroke="#000" stroke-width="3"/><text x="1482" y="115" font-size="17" font-weight="bold" fill="#000">m</text><text x="1496" y="107" font-size="12" font-weight="bold" fill="#000">2</text><rect x="1527.1" y="91" width="1.5" height="50" fill="#a0a0a0"/><circle cx="1546" cy="103" r="5.5" fill="none" stroke="#000" stroke-width="2"/><rect x="1545" y="102" width="2" height="2" fill="#000"/><polyline points="1548,122 1575,94" fill="none" stroke="#000" stroke-width="2" /><rect x="1565" y="113.75" width="14" height="2.5" fill="#000"/><rect x="1570.75" y="108" width="2.5" height="14" fill="#000"/><text x="1540" y="138" font-size="13" fill="#000" textLength="38" lengthAdjust="spacingAndGlyphs" font-family="Liberation Mono">XYZ</text><path d="M1592 95L1600 103M1600 95L1592 103" stroke="#000" stroke-width="2"/><path d="M1608 95L1616 103M1616 95L1608 103" stroke="#000" stroke-width="2"/><path d="M1592 122L1600 130M1600 122L1592 130" stroke="#000" stroke-width="2"/><rect x="1624" y="102" width="2" height="2" fill="#000"/><rect x="1623" y="114" width="2" height="2" fill="#000"/><rect x="1623" y="124" width="2" height="2" fill="#000"/><rect x="1623" y="134" width="2" height="2" fill="#000"/><rect x="1616" y="132" width="2" height="2" fill="#000"/><rect x="1610" y="122" width="2" height="2" fill="#000"/><rect x="1616" y="112" width="2" height="2" fill="#000"/><polyline points="1598,112 1612,132 1630,97" fill="none" stroke="#f00" stroke-width="5" /><rect x="1646" y="95" width="12" height="12" fill="#fff" stroke="#000" stroke-width="2"/><rect x="1657" y="96" width="2" height="12" fill="#f0f0f0"/><rect x="1645" y="106" width="14" height="2" fill="#f0f0f0"/><path d="M1649 98L1655 104M1655 98L1649 104" stroke="#000" stroke-width="2.5"/><polygon points="1649,133 1664,111 1679,133" fill="none" stroke="#0f0" stroke-width="2"/><path d="M1659 122L1669 132M1669 122L1659 132" stroke="#000" stroke-width="2"/><text x="1670" y="116" font-size="19" fill="#000">12</text><polyline points="1701,106 1729,134" fill="none" stroke="#a0a0a0" stroke-width="1.5" /><path d="M1705.5 124.5L1710.5 129.5M1710.5 124.5L1705.5 129.5" stroke="#000" stroke-width="2"/><path d="M1719.5 112.5L1724.5 117.5M1724.5 112.5L1719.5 117.5" stroke="#000" stroke-width="2"/><text x="1724" y="110" font-size="19" fill="#000">21</text><rect x="1753" y="91" width="1.5" height="50" fill="#a0a0a0"/><circle cx="1784.7" cy="116" r="20" fill="#0ff"/><rect x="1778.7" y="104" width="12" height="2" fill="#000"/><rect x="1776.7" y="106" width="4" height="2" fill="#000"/><rect x="1788.7" y="106" width="4" height="2" fill="#000"/><rect x="1774.7" y="108" width="4" height="2" fill="#000"/><rect x="1790.7" y="108" width="4" height="2" fill="#000"/><rect x="1774.7" y="108" width="2" height="16" fill="#000"/><rect x="1792.7" y="108" width="2" height="16" fill="#000"/><rect x="1772.7" y="112" width="4" height="2" fill="#000"/><rect x="1770.7" y="114" width="6" height="6" fill="#000"/><rect x="1772.7" y="120" width="4" height="2" fill="#000"/><rect x="1792.7" y="112" width="4" height="2" fill="#000"/><rect x="1792.7" y="114" width="6" height="6" fill="#000"/><rect x="1792.7" y="120" width="4" height="2" fill="#000"/><rect x="1790.7" y="124" width="2" height="2" fill="#000"/><rect x="1782.7" y="126" width="8" height="2" fill="#000"/><circle cx="1838.9" cy="116" r="20" fill="#0ff"/><rect x="1824.9" y="106" width="4" height="6" fill="#000"/><rect x="1826.9" y="110" width="4" height="8" fill="#000"/><rect x="1828.9" y="116" width="4" height="8" fill="#000"/><rect x="1830.9" y="122" width="4" height="6" fill="#000"/><rect x="1832.9" y="120" width="4" height="4" fill="#000"/><rect x="1834.9" y="118" width="2" height="6" fill="#000"/><rect x="1836.9" y="114" width="4" height="8" fill="#000"/><rect x="1840.9" y="118" width="2" height="6" fill="#000"/><rect x="1842.9" y="120" width="4" height="4" fill="#000"/><rect x="1842.9" y="122" width="4" height="6" fill="#000"/><rect x="1844.9" y="116" width="4" height="8" fill="#000"/><rect x="1846.9" y="110" width="4" height="8" fill="#000"/><rect x="1848.9" y="106" width="4" height="6" fill="#000"/></g>
<rect x="0" y="1910" width="3582" height="34" fill="#f0f0f0"/>
<rect x="0" y="1909.5" width="3582" height="1.5" fill="#000"/>
<rect x="0" y="1942" width="3582" height="2" fill="#2a2a2a"/>
<text x="12" y="1934.6" font-size="19.8" fill="#000" xml:space="preserve">X=6697008.486  Y=27444322.471   (GK27)</text>
<rect x="2411.5" y="1911" width="1.2" height="31" fill="#a8a8a8"/>
<rect x="2676.5" y="1911" width="1.2" height="31" fill="#a8a8a8"/>
<rect x="3139.5" y="1911" width="1.2" height="31" fill="#a8a8a8"/>
<rect x="3382.1" y="1911" width="1.2" height="31" fill="#a8a8a8"/>
<text x="2423.4" y="1934.6" font-size="20.3" fill="#000" xml:space="preserve">Ryhmä: 0+</text>
<text x="2688" y="1934.6" font-size="20.3" fill="#000" xml:space="preserve">Hakutapa: Hiiri</text>
<text x="3151" y="1934.6" font-size="20.3" fill="#000" xml:space="preserve">Zoom: XY  /  Kulmat</text>
<text x="3395" y="1934.6" font-size="20.3" fill="#000" xml:space="preserve">Maski ei käytössä</text>
<defs><filter id="shd" x="-5%" y="-5%" width="110%" height="110%"><feGaussianBlur stdDeviation="9"/></filter></defs>
<g clip-path="url(#mapclip)"><rect x="739" y="374" width="2819" height="1530.5" fill="#000" opacity="0.22" filter="url(#shd)"/></g>
<rect x="738" y="369" width="2815" height="1526.5" fill="#1b8fd2"/>
<rect x="738" y="369" width="2815" height="52" fill="#008bcc"/>
<polygon points="773.44,383 773.44,410.44 746,410.44" fill="#f7c21a"/><polygon points="767.85,396.92 767.85,402.6 754.23,402.6" fill="#008bcc"/><polygon points="754.23,402.6 767.85,402.6 767.85,404.56 751.39,404.56" fill="#008bcc" opacity="0.35"/>
<text x="785" y="404" font-size="20.7" fill="#fff" >Nimetön - [Kairausohje] - Taiteviivapoikkileikkaus</text>
<rect x="3341" y="396" width="15" height="1.3" fill="#fff"/>
<rect x="3423.5" y="388.5" width="14" height="14" fill="none" stroke="#fff" stroke-width="1.3"/>
<path d="M3504 388 L3519 403 M3519 388 L3504 403" stroke="#fff" stroke-width="1.3"/>
<rect x="740" y="421" width="2812" height="32" fill="#fff"/>
<text x="752.5" y="445" font-size="20.6" fill="#000" >Tiedosto</text>
<text x="857" y="445" font-size="20.6" fill="#000" >Zoomaus</text>
<text x="969.6" y="445" font-size="20.6" fill="#000" >Editointi</text>
<text x="1072" y="445" font-size="20.6" fill="#000" >Laskenta</text>
<text x="1178" y="445" font-size="20.6" fill="#000" >Selaus</text>
<text x="1263" y="445" font-size="20.6" fill="#000" >Asetukset</text>
<text x="1379.6" y="445" font-size="20.6" fill="#000" >Työkalut</text>
<text x="1482.6" y="445" font-size="20.6" fill="#000" >Ohje</text>
<rect x="740" y="453" width="2812" height="62" fill="#f0f0f0"/>
<g><polygon points="750,466 761,466 766,471 766,488 750,488" fill="#fff" stroke="#000" stroke-width="2"/><polyline points="761,466 761,471 766,471" fill="none" stroke="#000" stroke-width="2"/><path d="M771 476 H777 Q781 476 781 480 V485" fill="none" stroke="#000" stroke-width="4"/><polygon points="775,484 787,484 781,490" fill="#000"/><rect x="768" y="494" width="20" height="10" fill="#f4f4f4" stroke="#000" stroke-width="2"/><rect x="771" y="497" width="4" height="2" fill="#f00"/><rect x="771" y="501" width="16" height="2" fill="#a0a0a0"/><rect x="785" y="496" width="2" height="7" fill="#a0a0a0"/><polygon points="804,466 815,466 820,471 820,488 804,488" fill="#fff" stroke="#000" stroke-width="2"/><polyline points="815,466 815,471 820,471" fill="none" stroke="#000" stroke-width="2"/><path d="M825 469 H831 Q835 469 835 473 V478" fill="none" stroke="#000" stroke-width="4"/><polygon points="829,477 841,477 835,483" fill="#000"/><polygon points="828,484 839,484 844,489 844,506 828,506" fill="#fff" stroke="#000" stroke-width="2"/><polyline points="839,484 839,489 844,489" fill="none" stroke="#000" stroke-width="2"/><rect x="855" y="460" width="1.5" height="50" fill="#a0a0a0"/><polygon points="880,474 898,474 897,484 877,484" fill="#fff" stroke="#000" stroke-width="2"/><rect x="882" y="477" width="14" height="2" fill="#000"/><rect x="881" y="481" width="14" height="2" fill="#000"/><rect x="872" y="484" width="28" height="14" rx="3" fill="#fff" stroke="#000" stroke-width="2"/><rect x="874" y="490" width="22" height="2" fill="#000"/><rect x="885" y="492" width="6" height="2" fill="#ff0"/><rect x="885" y="490" width="6" height="2" fill="#a0a0a0"/><rect x="875" y="498" width="22" height="3" fill="#000"/><path d="M896 487l4 -4m-4 8l6 -6" stroke="#000" stroke-width="1.5"/><rect x="920" y="464" width="12" height="12" fill="#f4f4f4" stroke="#000" stroke-width="2"/><rect x="931" y="463" width="2" height="14" fill="#f0f0f0"/><rect x="919" y="475" width="14" height="2" fill="#f0f0f0"/><rect x="919" y="463" width="14" height="2" fill="#000"/><rect x="919" y="463" width="2" height="14" fill="#000"/><path d="M922.5 466.5L929.5 473.5M929.5 466.5L922.5 473.5" stroke="#000" stroke-width="2.5"/><rect x="924" y="479" width="34" height="21" fill="#fff" stroke="#000" stroke-width="2"/><text x="926.5" y="497" font-size="19" font-family="Liberation Mono" font-weight="bold" fill="#000" textLength="29" lengthAdjust="spacingAndGlyphs">1:50</text><rect x="974" y="468" width="42" height="34" fill="#fff" stroke="#000" stroke-width="2"/><rect x="973" y="463" width="15" height="2" fill="#000"/><rect x="973" y="463" width="2" height="14" fill="#000"/><rect x="975" y="465" width="14" height="14" fill="#f4f4f4"/><path d="M977.5 467.5L984.5 474.5M984.5 467.5L977.5 474.5" stroke="#000" stroke-width="2.5"/><rect x="988" y="467" width="2" height="0" fill="#000"/><rect x="1005" y="467" width="2" height="24" fill="#000"/><rect x="979" y="489" width="38" height="2" fill="#000"/><rect x="979" y="489" width="2" height="14" fill="#000"/><rect x="988" y="491" width="1.5" height="10" fill="#a0a0a0"/><rect x="1007" y="473" width="2" height="2" fill="#f0f"/><rect x="1011" y="473" width="3" height="2" fill="#a0a0a0"/><rect x="1007" y="477" width="2" height="2" fill="#0c0"/><rect x="1011" y="477" width="3" height="2" fill="#a0a0a0"/><rect x="1007" y="481" width="2" height="2" fill="#00f"/><rect x="1011" y="481" width="3" height="2" fill="#a0a0a0"/><rect x="1007" y="485" width="2" height="2" fill="#f00"/><rect x="1011" y="485" width="3" height="2" fill="#a0a0a0"/><path d="M1000 499 l3 -6 l3 6 l3 -6 l3 6 l2 -4" fill="none" stroke="#000" stroke-width="1.5"/><rect x="995" y="493" width="2" height="7" fill="#000"/><rect x="1026.5" y="460" width="1.5" height="50" fill="#a0a0a0"/><rect x="1039" y="465" width="40" height="34" rx="3" fill="#fff" stroke="#a0a0a0" stroke-width="4"/><rect x="1049" y="501" width="20" height="2" fill="#a0a0a0"/><rect x="1045" y="503" width="28" height="2" fill="#a0a0a0"/><rect x="1041" y="505" width="36" height="3" fill="#a0a0a0"/><path d="M1043 470 h10 M1044 469 v10 M1046 472 l7 7" stroke="#000" stroke-width="2" fill="none"/><path d="M1075 470 h-10 M1074 469 v10 M1072 472 l-7 7" stroke="#000" stroke-width="2" fill="none"/><path d="M1043 494 h10 M1044 495 v-10 M1046 492 l7 -7" stroke="#000" stroke-width="2" fill="none"/><path d="M1075 494 h-10 M1074 495 v-10 M1072 492 l-7 -7" stroke="#000" stroke-width="2" fill="none"/><rect x="1093" y="465" width="40" height="34" rx="3" fill="#fff" stroke="#a0a0a0" stroke-width="4"/><rect x="1103" y="501" width="20" height="2" fill="#a0a0a0"/><rect x="1099" y="503" width="28" height="2" fill="#a0a0a0"/><rect x="1095" y="505" width="36" height="3" fill="#a0a0a0"/><rect x="1113" y="471" width="10" height="8" fill="#000"/><rect x="1115" y="473" width="4" height="4" fill="#fff"/><rect x="1119" y="479" width="6" height="8" fill="#000"/><rect x="1120" y="487" width="4" height="2" fill="#000"/><rect x="1115" y="489" width="7" height="2" fill="#000"/><rect x="1113" y="479" width="6" height="6" fill="#ff0"/><rect x="1111" y="485" width="6" height="4" fill="#ff0"/><rect x="1109" y="489" width="6" height="2" fill="#ff0"/><rect x="1111" y="479" width="2" height="4" fill="#000"/><rect x="1109" y="483" width="2" height="3" fill="#000"/><rect x="1107" y="486" width="2" height="3" fill="#000"/><rect x="1117" y="485" width="3" height="4" fill="#000"/><rect x="1099" y="491" width="20" height="2" fill="#000"/><rect x="1147" y="465" width="40" height="34" rx="3" fill="#fff" stroke="#a0a0a0" stroke-width="4"/><rect x="1157" y="501" width="20" height="2" fill="#a0a0a0"/><rect x="1153" y="503" width="28" height="2" fill="#a0a0a0"/><rect x="1149" y="505" width="36" height="3" fill="#a0a0a0"/><polygon points="1153,484 1162,475 1162,479 1181,479 1181,489 1162,489 1162,493" fill="#fff" stroke="#000" stroke-width="2.5"/><rect x="1201" y="465" width="40" height="34" rx="3" fill="#fff" stroke="#a0a0a0" stroke-width="4"/><rect x="1211" y="501" width="20" height="2" fill="#a0a0a0"/><rect x="1207" y="503" width="28" height="2" fill="#a0a0a0"/><rect x="1203" y="505" width="36" height="3" fill="#a0a0a0"/><polygon points="1235,484 1226,475 1226,479 1207,479 1207,489 1226,489 1226,493" fill="#fff" stroke="#000" stroke-width="2.5"/><rect x="1255" y="465" width="40" height="34" rx="3" fill="#fff" stroke="#a0a0a0" stroke-width="4"/><rect x="1265" y="501" width="20" height="2" fill="#a0a0a0"/><rect x="1261" y="503" width="28" height="2" fill="#a0a0a0"/><rect x="1257" y="505" width="36" height="3" fill="#a0a0a0"/><circle cx="1272" cy="482" r="9" fill="#fff" stroke="#000" stroke-width="2.5"/><rect x="1266" y="480.5" width="12" height="3.5" fill="#000"/><rect x="1270.2" y="476" width="3.5" height="12" fill="#000"/><polyline points="1278,489 1285,496" fill="none" stroke="#000" stroke-width="3.5" /><rect x="1309" y="465" width="40" height="34" rx="3" fill="#fff" stroke="#a0a0a0" stroke-width="4"/><rect x="1319" y="501" width="20" height="2" fill="#a0a0a0"/><rect x="1315" y="503" width="28" height="2" fill="#a0a0a0"/><rect x="1311" y="505" width="36" height="3" fill="#a0a0a0"/><circle cx="1326" cy="482" r="9" fill="#fff" stroke="#000" stroke-width="2.5"/><rect x="1320" y="480.5" width="12" height="3.5" fill="#000"/><polyline points="1332,489 1339,496" fill="none" stroke="#000" stroke-width="3.5" /><rect x="1361.1" y="460" width="1.5" height="50" fill="#a0a0a0"/><rect x="1380" y="489" width="16" height="4" fill="#f00"/><rect x="1386" y="483" width="4" height="16" fill="#f00"/><text x="1397" y="493" font-size="26" font-weight="bold" fill="#000">?</text><rect x="1420.5" y="458.5" width="52" height="52" fill="#f0f0f0" stroke="#b4b4b4" stroke-width="1.2"/><path d="M1420.5 510.5 H1472.5 V458.5" fill="none" stroke="#fff" stroke-width="1.2"/><polyline points="1428,475 1456,503" fill="none" stroke="#a0a0a0" stroke-width="1.5" /><path d="M1432.5 493.5L1437.5 498.5M1437.5 493.5L1432.5 498.5" stroke="#000" stroke-width="2"/><path d="M1446.5 481.5L1451.5 486.5M1451.5 481.5L1446.5 486.5" stroke="#000" stroke-width="2"/><text x="1451" y="479" font-size="19" fill="#000">21</text><circle cx="1488" cy="472" r="5.5" fill="none" stroke="#000" stroke-width="2"/><rect x="1487" y="471" width="2" height="2" fill="#000"/><polyline points="1490,491 1517,463" fill="none" stroke="#000" stroke-width="2" /><rect x="1507" y="482.75" width="14" height="2.5" fill="#000"/><rect x="1512.75" y="477" width="2.5" height="14" fill="#000"/><text x="1482" y="507" font-size="13" fill="#000" textLength="38" lengthAdjust="spacingAndGlyphs" font-family="Liberation Mono">XYZ</text><path d="M1535 464L1543 472M1543 464L1535 472" stroke="#000" stroke-width="2"/><path d="M1551 464L1559 472M1559 464L1551 472" stroke="#000" stroke-width="2"/><path d="M1535 491L1543 499M1543 491L1535 499" stroke="#000" stroke-width="2"/><rect x="1567" y="471" width="2" height="2" fill="#000"/><rect x="1566" y="483" width="2" height="2" fill="#000"/><rect x="1566" y="493" width="2" height="2" fill="#000"/><rect x="1566" y="503" width="2" height="2" fill="#000"/><rect x="1559" y="501" width="2" height="2" fill="#000"/><rect x="1553" y="491" width="2" height="2" fill="#000"/><rect x="1559" y="481" width="2" height="2" fill="#000"/><polyline points="1541,481 1555,501 1573,466" fill="none" stroke="#f00" stroke-width="5" /><rect x="1587" y="460" width="1.5" height="50" fill="#a0a0a0"/><circle cx="1619" cy="485" r="18" fill="#00f"/><polygon points="1608,485 1617,476 1617,494" fill="#fff"/><rect x="1621" y="476" width="4" height="18" fill="#fff"/><circle cx="1673" cy="485" r="18" fill="#00f"/><polygon points="1684,485 1675,476 1675,494" fill="#fff"/><rect x="1667" y="476" width="4" height="18" fill="#fff"/><rect x="1704.5" y="460" width="1.5" height="50" fill="#a0a0a0"/><circle cx="1737" cy="485" r="20" fill="#f00"/><text x="1737" y="496" font-size="30" font-weight="bold" fill="#fff" text-anchor="middle">?</text></g>
<rect x="740" y="515" width="2812" height="1.2" fill="#000"/>
<rect x="740" y="516" width="2811" height="1346" fill="#fff"/>
<rect x="3551" y="516" width="1.2" height="1347" fill="#000"/>
<rect x="740" y="1862" width="2812" height="1.2" fill="#000"/>
<rect x="740" y="1863" width="2812" height="31.5" fill="#f0f0f0"/>
<text x="750.5" y="1887.5" font-size="20.2" fill="#000" xml:space="preserve">B=3.391  Z=-0.896</text>
<rect x="2381.5" y="1863" width="1.2" height="31.5" fill="#a8a8a8"/>
<rect x="2647" y="1863" width="1.2" height="31.5" fill="#a8a8a8"/>
<rect x="3109.5" y="1863" width="1.2" height="31.5" fill="#a8a8a8"/>
<rect x="3353.5" y="1863" width="1.2" height="31.5" fill="#a8a8a8"/>
<text x="2394.6" y="1887" font-size="20.3" fill="#000" xml:space="preserve">Ryhmä: 0+</text>
<text x="2659" y="1887" font-size="20.3" fill="#000" xml:space="preserve">Hakutapa: Lähin piste (Samat pisteet)</text>
<text x="3122" y="1887" font-size="20.3" fill="#000" xml:space="preserve">Zoom: BZ  /  Kulmat</text>
<text x="3365" y="1887" font-size="20.3" fill="#000" xml:space="preserve">Maski ei käytössä</text>
<g clip-path="url(#chartclip)">
<defs><clipPath id="chartclip"><rect x="740" y="516" width="2811" height="1346"/></clipPath></defs>
<rect x="888" y="576.4" width="2620" height="1207.6" fill="none" stroke="#c0c0c0" stroke-width="1.5"/>
<line x1="1128.5" y1="576.4" x2="1128.5" y2="1794" stroke="#c0c0c0" stroke-width="1.5" />
<line x1="2237.5" y1="576.4" x2="2237.5" y2="1794" stroke="#c0c0c0" stroke-width="1.5" />
<line x1="2792" y1="576.4" x2="2792" y2="1794" stroke="#c0c0c0" stroke-width="1.5" />
<line x1="3346.5" y1="576.4" x2="3346.5" y2="1794" stroke="#c0c0c0" stroke-width="1.5" />
<line x1="878.5" y1="631.5" x2="3508" y2="631.5" stroke="#c0c0c0" stroke-width="1.5" />
<line x1="878.5" y1="1740.5" x2="3508" y2="1740.5" stroke="#c0c0c0" stroke-width="1.5" />
<line x1="878.5" y1="1629.6" x2="888" y2="1629.6" stroke="#c0c0c0" stroke-width="1.5" />
<line x1="878.5" y1="1518.7" x2="888" y2="1518.7" stroke="#c0c0c0" stroke-width="1.5" />
<line x1="878.5" y1="1407.8" x2="888" y2="1407.8" stroke="#c0c0c0" stroke-width="1.5" />
<line x1="878.5" y1="1296.9" x2="888" y2="1296.9" stroke="#c0c0c0" stroke-width="1.5" />
<line x1="878.5" y1="1075.1" x2="888" y2="1075.1" stroke="#c0c0c0" stroke-width="1.5" />
<line x1="878.5" y1="964.2" x2="888" y2="964.2" stroke="#c0c0c0" stroke-width="1.5" />
<line x1="878.5" y1="853.3" x2="888" y2="853.3" stroke="#c0c0c0" stroke-width="1.5" />
<line x1="878.5" y1="742.4" x2="888" y2="742.4" stroke="#c0c0c0" stroke-width="1.5" />
<line x1="906.7" y1="1784" x2="906.7" y2="1794" stroke="#c0c0c0" stroke-width="1.5" />
<line x1="1017.6" y1="1784" x2="1017.6" y2="1794" stroke="#c0c0c0" stroke-width="1.5" />
<line x1="1128.5" y1="1784" x2="1128.5" y2="1794" stroke="#c0c0c0" stroke-width="1.5" />
<line x1="1239.4" y1="1784" x2="1239.4" y2="1794" stroke="#c0c0c0" stroke-width="1.5" />
<line x1="1350.3" y1="1784" x2="1350.3" y2="1794" stroke="#c0c0c0" stroke-width="1.5" />
<line x1="1461.2" y1="1784" x2="1461.2" y2="1794" stroke="#c0c0c0" stroke-width="1.5" />
<line x1="1572.1" y1="1784" x2="1572.1" y2="1794" stroke="#c0c0c0" stroke-width="1.5" />
<line x1="1683" y1="1784" x2="1683" y2="1794" stroke="#c0c0c0" stroke-width="1.5" />
<line x1="1793.9" y1="1784" x2="1793.9" y2="1794" stroke="#c0c0c0" stroke-width="1.5" />
<line x1="1904.8" y1="1784" x2="1904.8" y2="1794" stroke="#c0c0c0" stroke-width="1.5" />
<line x1="2015.7" y1="1784" x2="2015.7" y2="1794" stroke="#c0c0c0" stroke-width="1.5" />
<line x1="2126.6" y1="1784" x2="2126.6" y2="1794" stroke="#c0c0c0" stroke-width="1.5" />
<line x1="2237.5" y1="1784" x2="2237.5" y2="1794" stroke="#c0c0c0" stroke-width="1.5" />
<line x1="2348.4" y1="1784" x2="2348.4" y2="1794" stroke="#c0c0c0" stroke-width="1.5" />
<line x1="2459.3" y1="1784" x2="2459.3" y2="1794" stroke="#c0c0c0" stroke-width="1.5" />
<line x1="2570.2" y1="1784" x2="2570.2" y2="1794" stroke="#c0c0c0" stroke-width="1.5" />
<line x1="2681.1" y1="1784" x2="2681.1" y2="1794" stroke="#c0c0c0" stroke-width="1.5" />
<line x1="2792" y1="1784" x2="2792" y2="1794" stroke="#c0c0c0" stroke-width="1.5" />
<line x1="2902.9" y1="1784" x2="2902.9" y2="1794" stroke="#c0c0c0" stroke-width="1.5" />
<line x1="3013.8" y1="1784" x2="3013.8" y2="1794" stroke="#c0c0c0" stroke-width="1.5" />
<line x1="3124.7" y1="1784" x2="3124.7" y2="1794" stroke="#c0c0c0" stroke-width="1.5" />
<line x1="3235.6" y1="1784" x2="3235.6" y2="1794" stroke="#c0c0c0" stroke-width="1.5" />
<line x1="3346.5" y1="1784" x2="3346.5" y2="1794" stroke="#c0c0c0" stroke-width="1.5" />
<line x1="3457.4" y1="1784" x2="3457.4" y2="1794" stroke="#c0c0c0" stroke-width="1.5" />
<line x1="879" y1="1186" x2="3508" y2="1186" stroke="#c0c0c0" stroke-width="6" stroke-linecap="round"/>
<line x1="1683" y1="576.4" x2="1683" y2="1784" stroke="#c0c0c0" stroke-width="6" />
<text x="869" y="643.5" font-size="34.7" fill="#000" text-anchor="end" >10</text>
<text x="869" y="1198" font-size="34.7" fill="#000" text-anchor="end" >0</text>
<text x="869" y="1752.5" font-size="34.7" fill="#000" text-anchor="end" >-10</text>
<text x="1128.5" y="1834.6" font-size="34.7" fill="#000" text-anchor="middle" >-10</text>
<text x="1683" y="1834.6" font-size="34.7" fill="#000" text-anchor="middle" >0</text>
<text x="2237.5" y="1834.6" font-size="34.7" fill="#000" text-anchor="middle" >10</text>
<text x="2792" y="1834.6" font-size="34.7" fill="#000" text-anchor="middle" >20</text>
<text x="3346.5" y="1834.6" font-size="34.7" fill="#000" text-anchor="middle" >30</text>
<polyline points="1479,516 1455.5,552.4 1490,552.4" fill="none" stroke="#000080" stroke-width="2" />
<polyline points="2241,520 2274.8,520 2241,576.4 2274.8,576.4" fill="none" stroke="#000080" stroke-width="2" />
<line x1="3315" y1="516" x2="3315" y2="1862" stroke="#0000ff" stroke-width="2" stroke-dasharray="19 4.5 2 4.5"/>
<line x1="3043" y1="726" x2="3043" y2="769" stroke="#ff8000" stroke-width="4.5" stroke-linecap="round"/>
<polyline points="1505.5,933 1574,963 1674,934 1844,925.5 2006,925.5 2237.5,930 2522,940 2669,943 2832.5,969.5 2957.5,942.5" fill="none" stroke="#008000" stroke-width="2.4" stroke-linejoin="round"/>
<line x1="1619.5" y1="951.1" x2="1617.5" y2="969.7" stroke="#008000" stroke-width="2.3" stroke-linecap="round"/><line x1="1624.7" y1="949.5" x2="1622.7" y2="968.1" stroke="#008000" stroke-width="2.3" stroke-linecap="round"/><line x1="1629.7" y1="948" x2="1627.7" y2="966.6" stroke="#008000" stroke-width="2.3" stroke-linecap="round"/>
<line x1="1919.7" y1="925.7" x2="1913" y2="943.6" stroke="#008000" stroke-width="2.3" stroke-linecap="round"/><line x1="1925" y1="925.7" x2="1918.3" y2="943.6" stroke="#008000" stroke-width="2.3" stroke-linecap="round"/><line x1="1930.4" y1="925.7" x2="1923.7" y2="943.6" stroke="#008000" stroke-width="2.3" stroke-linecap="round"/>
<line x1="2331.5" y1="934.8" x2="2324.7" y2="952" stroke="#008000" stroke-width="2.3" stroke-linecap="round"/><line x1="2336.6" y1="935" x2="2329.8" y2="952.2" stroke="#008000" stroke-width="2.3" stroke-linecap="round"/><line x1="2341.8" y1="935.5" x2="2335" y2="952.7" stroke="#008000" stroke-width="2.3" stroke-linecap="round"/>
<line x1="2745" y1="955.7" x2="2735.7" y2="971.9" stroke="#008000" stroke-width="2.3" stroke-linecap="round"/><line x1="2750" y1="956.8" x2="2740.7" y2="973" stroke="#008000" stroke-width="2.3" stroke-linecap="round"/><line x1="2755.2" y1="957.9" x2="2745.9" y2="974.1" stroke="#008000" stroke-width="2.3" stroke-linecap="round"/>
<line x1="2889.3" y1="957.2" x2="2886.5" y2="976.4" stroke="#008000" stroke-width="2.3" stroke-linecap="round"/><line x1="2894.7" y1="956.1" x2="2891.9" y2="975.3" stroke="#008000" stroke-width="2.3" stroke-linecap="round"/><line x1="2899.9" y1="955" x2="2897.1" y2="974.2" stroke="#008000" stroke-width="2.3" stroke-linecap="round"/>
<text x="1215" y="912" font-size="21.5" fill="#000" >110, +4.66</text>
<line x1="1208" y1="928" x2="1320.7" y2="928" stroke="#000" stroke-width="2.2" />
<polyline points="1230.5,928 1230.5,933.5 1297.5,933.5 1297.5,928" fill="none" stroke="#000" stroke-width="1.6" />
<line x1="1242" y1="928" x2="1242" y2="1099" stroke="#000" stroke-width="2" />
<line x1="1286.8" y1="928" x2="1286.8" y2="1099" stroke="#000" stroke-width="2" />
<line x1="1242" y1="1097.5" x2="1286.8" y2="1097.5" stroke="#000" stroke-width="1.6" />
<line x1="1264" y1="935" x2="1264" y2="1086" stroke="#000" stroke-width="2" stroke-dasharray="14 5"/>
<polyline points="1242,938.8 1312,938.8 1312,1000 1314,1000 1314,1055.8 1397.5,1055.8 1397.5,1069.3 1841,1069.3 1841,1077.5 1378.8,1077.5 1378.8,1093.8 1841,1093.8 1841,1100" fill="none" stroke="#000" stroke-width="2" />
<line x1="1219.5" y1="1100" x2="1312.5" y2="1100" stroke="#000" stroke-width="2" />
<line x1="1313.3" y1="1100" x2="1841" y2="1100" stroke="#000" stroke-width="2" stroke-dasharray="10 7.5" stroke-dashoffset="10"/>
<text x="1299" y="972" font-size="34.7" fill="#000" >SA</text>
<text x="1299" y="1128.8" font-size="34.7" fill="#000" >SI</text>
<text x="1207.5" y="1153.8" font-size="21.6" fill="#000" >+1.56 / 3.10</text>
<polyline points="1020.5,1200 1020.5,1212 1242,1212 1242,1200" fill="none" stroke="#000" stroke-width="2" /><line x1="1131" y1="1200" x2="1131" y2="1212" stroke="#000" stroke-width="2" /><polyline points="1286.8,1200 1286.8,1212 1841.5,1212 1841.5,1200" fill="none" stroke="#000" stroke-width="2" /><line x1="1397.7" y1="1200" x2="1397.7" y2="1212" stroke="#000" stroke-width="2" /><line x1="1508.6" y1="1200" x2="1508.6" y2="1212" stroke="#000" stroke-width="2" /><line x1="1619.5" y1="1200" x2="1619.5" y2="1212" stroke="#000" stroke-width="2" /><line x1="1730.4" y1="1200" x2="1730.4" y2="1212" stroke="#000" stroke-width="2" /><text x="855" y="1257" font-size="34.7" fill="#000" >kN</text><text x="1020.5" y="1257" font-size="34.7" fill="#000" text-anchor="middle" >2</text><text x="1131" y="1257" font-size="34.7" fill="#000" text-anchor="middle" >1</text><text x="1242" y="1257" font-size="34.7" fill="#000" text-anchor="middle" >0</text><text x="1286.8" y="1257" font-size="34.7" fill="#000" text-anchor="middle" >0</text><text x="1397.7" y="1257" font-size="34.7" fill="#000" text-anchor="middle" >20</text><text x="1508.6" y="1257" font-size="34.7" fill="#000" text-anchor="middle" >40</text><text x="1619.5" y="1257" font-size="34.7" fill="#000" text-anchor="middle" >60</text><text x="1730.4" y="1257" font-size="34.7" fill="#000" text-anchor="middle" >80</text><text x="1841.3" y="1257" font-size="34.7" fill="#000" text-anchor="middle" >100</text><text x="1925" y="1257" font-size="34.9" fill="#000" >pk/0.2m Puolikierrokset</text><text x="855" y="1312.5" font-size="34.6" fill="#000" >Vapaapainuma</text>
<polyline points="2118,1348 2118,1360 2339.5,1360 2339.5,1348" fill="none" stroke="#000" stroke-width="2" /><line x1="2228.5" y1="1348" x2="2228.5" y2="1360" stroke="#000" stroke-width="2" /><polyline points="2384.3,1348 2384.3,1360 2939,1360 2939,1348" fill="none" stroke="#000" stroke-width="2" /><line x1="2495.2" y1="1348" x2="2495.2" y2="1360" stroke="#000" stroke-width="2" /><line x1="2606.1" y1="1348" x2="2606.1" y2="1360" stroke="#000" stroke-width="2" /><line x1="2717" y1="1348" x2="2717" y2="1360" stroke="#000" stroke-width="2" /><line x1="2827.9" y1="1348" x2="2827.9" y2="1360" stroke="#000" stroke-width="2" /><text x="1952.5" y="1405" font-size="34.7" fill="#000" >kN</text><text x="2118" y="1405" font-size="34.7" fill="#000" text-anchor="middle" >2</text><text x="2228.5" y="1405" font-size="34.7" fill="#000" text-anchor="middle" >1</text><text x="2339.5" y="1405" font-size="34.7" fill="#000" text-anchor="middle" >0</text><text x="2384.3" y="1405" font-size="34.7" fill="#000" text-anchor="middle" >0</text><text x="2495.2" y="1405" font-size="34.7" fill="#000" text-anchor="middle" >20</text><text x="2606.1" y="1405" font-size="34.7" fill="#000" text-anchor="middle" >40</text><text x="2717" y="1405" font-size="34.7" fill="#000" text-anchor="middle" >60</text><text x="2827.9" y="1405" font-size="34.7" fill="#000" text-anchor="middle" >80</text><text x="2938.8" y="1405" font-size="34.7" fill="#000" text-anchor="middle" >100</text><text x="3022.5" y="1405" font-size="34.9" fill="#000" >pk/0.2m Puolikierrokset</text><text x="1952.5" y="1460.5" font-size="34.6" fill="#000" >Vapaapainuma</text>
<text x="2312" y="923" font-size="21.5" fill="#000" >102, +4.47</text>
<line x1="2306" y1="938" x2="2418" y2="938" stroke="#000" stroke-width="2.2" />
<polyline points="2329,944 2395.5,944 2395.5,938" fill="none" stroke="#000" stroke-width="1.6" />
<line x1="2339.5" y1="938" x2="2341" y2="1247.5" stroke="#000" stroke-width="2" />
<line x1="2384" y1="938" x2="2384" y2="1247.5" stroke="#000" stroke-width="2" />
<line x1="2362" y1="946" x2="2362" y2="1185" stroke="#000" stroke-width="2" stroke-dasharray="14 5"/>
<line x1="2357" y1="1190" x2="2357" y2="1230" stroke="#000" stroke-width="1.8" stroke-dasharray="10 4"/>
<line x1="2366" y1="1190" x2="2366" y2="1230" stroke="#000" stroke-width="1.8" stroke-dasharray="10 4"/>
<polyline points="2340,949.6 2941,949.6" fill="none" stroke="#000" stroke-width="2.6" />
<polyline points="2941,929 2941,944 2947.5,944" fill="none" stroke="#000" stroke-width="1.8" />
<polyline points="2400.6,949.6 2400.6,960 2427.5,960" fill="none" stroke="#000" stroke-width="2" />
<polyline points="2422.5,982.5 2433.8,982.5 2433.8,993.8 2417.5,993.8 2417.5,1004.6 2412,1004.6 2412,1016 2417.5,1016 2417.5,1027 2412,1027 2412,1038 2384,1038" fill="none" stroke="#000" stroke-width="2" />
<polyline points="2384,1043.8 2395.5,1043.8 2395.5,1049 2384,1049" fill="none" stroke="#000" stroke-width="2" />
<polyline points="2340,1037.5 2228.8,1037.5 2228.8,1043.8 2340,1043.8" fill="none" stroke="#000" stroke-width="2" />
<polyline points="2340,1049 2228.8,1049 2228.8,1065.7 2256.8,1065.7 2256.8,1088 2284.5,1088 2284.5,1159.5 2256.8,1159.5 2256.8,1190.8 2228.8,1190.8 2228.8,1199 2512,1199 2512,1210 2421,1210 2421,1232 2425,1232 2425,1210" fill="none" stroke="#000" stroke-width="2" />
<polyline points="2425,1221 2533.8,1221 2533.8,1232 2517.5,1232 2517.5,1243 2941,1243" fill="none" stroke="#000" stroke-width="2" />
<line x1="2317.5" y1="1247.5" x2="2406" y2="1247.5" stroke="#000" stroke-width="2" />
<line x1="2406" y1="1247.5" x2="2937" y2="1247.5" stroke="#000" stroke-width="2" stroke-dasharray="10 7.5" stroke-dashoffset="10"/>
<polygon points="2340,1248 2329,1270 2351,1270" fill="none" stroke="#000" stroke-width="2"/>
<polyline points="2384,1247.5 2372.5,1270" fill="none" stroke="#000" stroke-width="2" /><polyline points="2379,1259 2385,1270" fill="none" stroke="#000" stroke-width="2" />
<text x="2397" y="982" font-size="34.7" fill="#000" >SA</text>
<text x="2397" y="1231" font-size="34.7" fill="#000" >SI</text>
<text x="2308" y="1302" font-size="21.6" fill="#000" >-1.11 / 5.58</text>
<text x="2940" y="1242" font-size="23" font-family="Liberation Serif" fill="#000">167</text>
<line x1="2941" y1="1227" x2="2941" y2="1243" stroke="#000" stroke-width="1.6" />
</g>
<rect x="738" y="421" width="2" height="1474.5" fill="#1b8fd2"/>
</svg>
</body></html>
